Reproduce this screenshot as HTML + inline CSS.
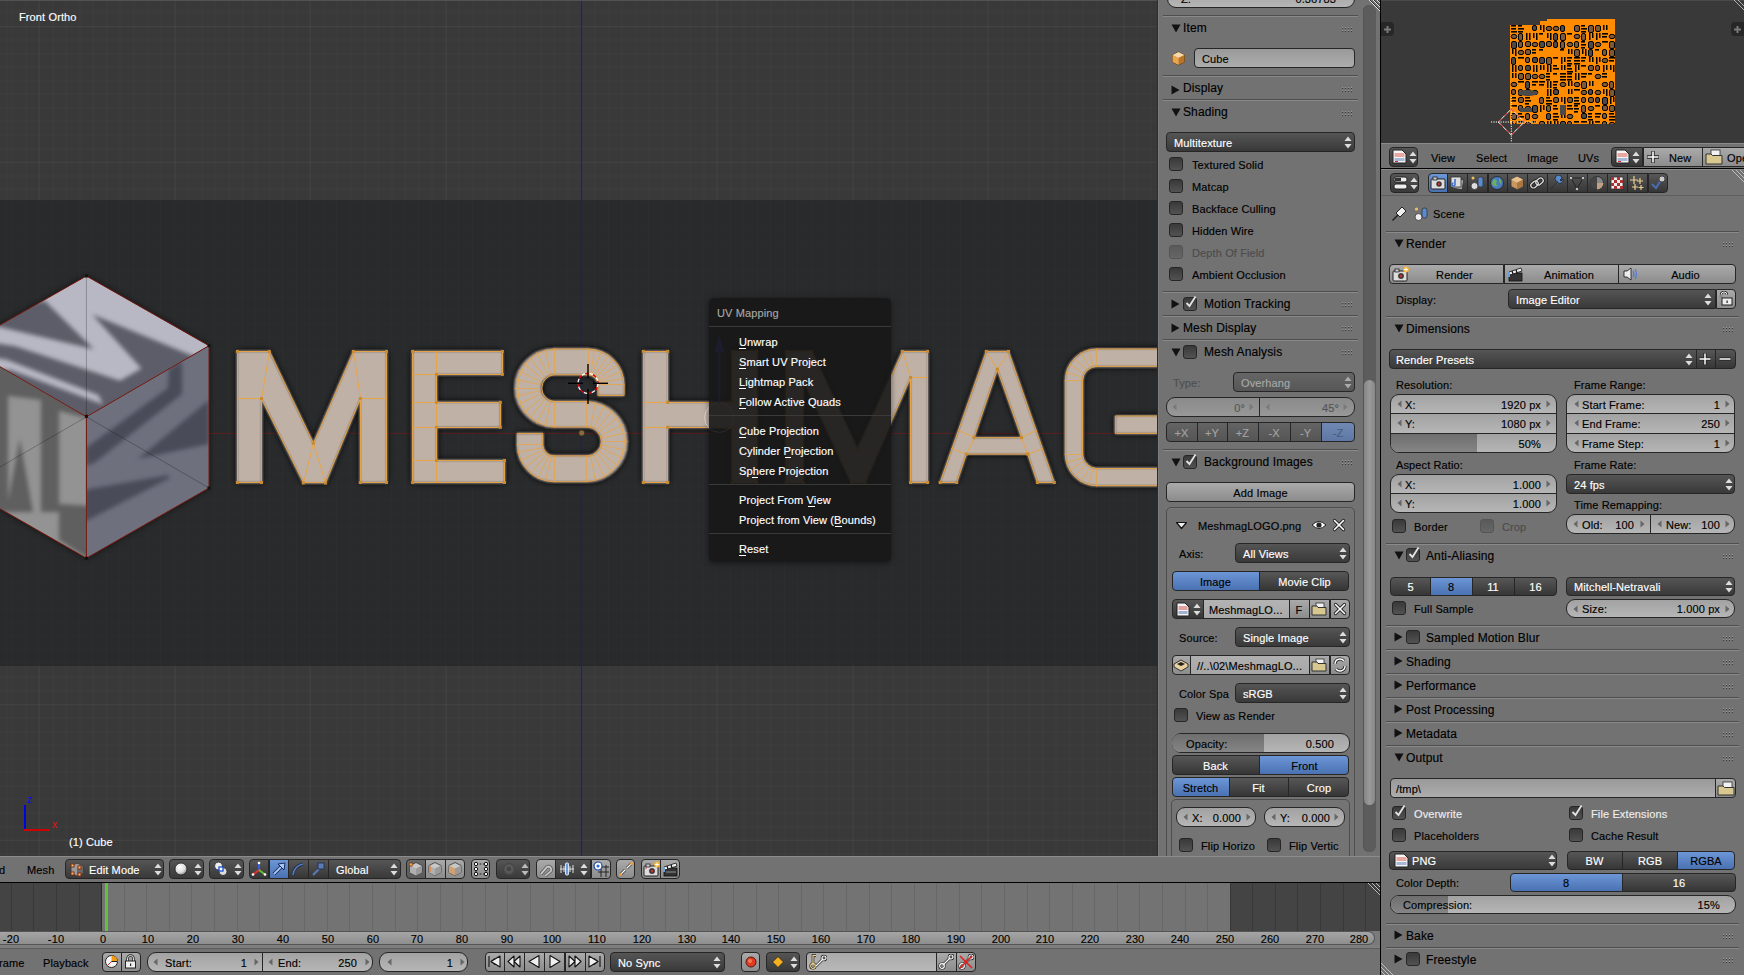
<!DOCTYPE html>
<html><head><meta charset="utf-8">
<style>
*{margin:0;padding:0;box-sizing:border-box}
html,body{width:1744px;height:975px;overflow:hidden}
body{position:relative;background:#1a1a1a;font-family:"Liberation Sans",sans-serif;font-size:11px;color:#000}
.a{position:absolute}
.t{position:absolute;white-space:nowrap;line-height:13px;height:13px;letter-spacing:0.12px;-webkit-text-stroke:0.15px currentColor}
.w{color:#fff}
.btn{position:absolute;border:1px solid #191919;border-radius:4px;background:linear-gradient(#a8a8a8,#8e8e8e);text-align:center;line-height:17px;white-space:nowrap;overflow:hidden}
.num{position:absolute;border:1px solid #191919;border-radius:8px;background:linear-gradient(#a3a3a3,#b7b7b7);line-height:17px;white-space:nowrap;overflow:hidden}
.menu{position:absolute;border:1px solid #191919;border-radius:4px;background:linear-gradient(#555,#3b3b3b);color:#fff;line-height:17px;white-space:nowrap;overflow:hidden;padding-left:8px}
.rad{position:absolute;border:1px solid #191919;background:linear-gradient(#4f4f4f,#3d3d3d);color:#fff;text-align:center;line-height:17px;white-space:nowrap;overflow:hidden}
.sel{background:linear-gradient(#6b93d1,#4f78b8);color:#000}
.chk{position:absolute;width:14px;height:14px;border:1px solid #191919;border-radius:3px;background:linear-gradient(#3c3c3c,#505050)}
.tf{position:absolute;border:1px solid #191919;border-radius:4px;background:linear-gradient(#999,#aaa);line-height:17px;white-space:nowrap;overflow:hidden;padding-left:8px}
.sep{position:absolute;height:2px;border-top:1px solid #5a5a5a;border-bottom:1px solid #858585}
.ul{position:absolute;height:1px;background:#fff}
</style></head>
<body>

<!-- ============ 3D VIEWPORT ============ -->
<div class="a" id="vp" style="left:0;top:0;width:1158px;height:856px;background:#393939;overflow:hidden">
  <div class="a" style="left:0;top:0;width:1158px;height:856px;background-image:repeating-linear-gradient(90deg,rgba(255,255,255,0.016) 0 1px,transparent 1px 13.56px),repeating-linear-gradient(180deg,rgba(255,255,255,0.016) 0 1px,transparent 1px 13.56px);background-position:11.5px 0,0 12.5px"></div>
  <div class="a" style="left:0;top:0;width:1158px;height:856px;background-image:repeating-linear-gradient(90deg,rgba(255,255,255,0.03) 0 1px,transparent 1px 135.6px),repeating-linear-gradient(180deg,rgba(255,255,255,0.03) 0 1px,transparent 1px 135.6px);background-position:38.6px 0,0 26px"></div>
  <div class="a" style="left:0;top:200px;width:1158px;height:466px;background:#292a2c"></div>
  <div class="a" style="left:0;top:200px;width:1158px;height:466px;background-image:repeating-linear-gradient(90deg,rgba(255,235,210,0.013) 0 1px,transparent 1px 13.56px),repeating-linear-gradient(180deg,rgba(255,235,210,0.013) 0 1px,transparent 1px 13.56px);background-position:11px 0,0 1.5px"></div>
  <svg class="a" style="left:0;top:0" width="1158" height="856"><line x1="0" y1="433.5" x2="1158" y2="433.5" stroke="#5a2020" stroke-width="1"/><line x1="581.5" y1="0" x2="581.5" y2="856" stroke="#1c1c8c" stroke-width="1.2"/></svg>

<svg class="a" style="left:0;top:0" width="260" height="600" viewBox="0 0 260 600">
<defs><filter id="cb" x="-20%" y="-20%" width="140%" height="140%"><feGaussianBlur stdDeviation="2.2"/></filter>
<clipPath id="ctop"><polygon points="86.4,276 209,345.7 86.4,416.8 -36.2,345.7"/></clipPath>
<clipPath id="crt"><polygon points="86.4,416.8 209,345.7 209,488 86.4,558.2"/></clipPath>
<clipPath id="clf"><polygon points="-36.2,345.7 86.4,416.8 86.4,558.2 -36.2,488"/></clipPath>
<filter id="csh" x="-20%" y="-20%" width="140%" height="140%"><feGaussianBlur stdDeviation="3"/></filter></defs>
<polygon points="86.4,276 209,345.7 209,488 86.4,558.2 -36.2,488 -36.2,345.7" fill="#000" opacity="0.6" filter="url(#csh)"/>
<g clip-path="url(#ctop)"><polygon points="86.4,276 209,345.7 86.4,416.8 -36.2,345.7" fill="#b7b8c4"/>
<g filter="url(#cb)" fill="#5c5d68">
<polygon points="44.6,300.8 93.8,349.2 0,327 -10,326 -10,310"/>
<polygon points="92.3,314.6 215,365 215,440 -10,440 -10,342.3 15.4,346.2 120,380.7 141.5,368.4"/>
</g>
<g filter="url(#cb)" fill="#b7b8c4"><polygon points="-10,357 6.2,359.5 98.5,395 103,404.5 10.8,370 -10,370"/></g>
</g>
<g clip-path="url(#crt)"><polygon points="86.4,416.8 209,345.7 209,488 86.4,558.2" fill="#6e707e"/>
<g filter="url(#cb)" fill="#4a4c59">
<polygon points="169,369 182,361 182,394 94.9,462.5 86,466 86,448 167.8,388"/>
<polygon points="209,400 209,444 137.7,459"/>
<polygon points="84,490 168,475 170,478 84,522"/>
</g></g>
<g clip-path="url(#clf)"><polygon points="-36.2,345.7 86.4,416.8 86.4,558.2 -36.2,488" fill="#939393"/>
<g filter="url(#cb)" fill="#5e5e5e">
<polygon points="-5,360 85.4,412.8 85.4,418 60,411 41,400 -5,394"/>
<polygon points="41,383 59,392 59,512 41,512"/>
<polygon points="19.7,438.8 33,512 6,512"/>
<polygon points="-5,366 8,371 8,512 -5,512"/>
<polygon points="59,504 90,506 90,560 59,540"/>
</g></g>
<g stroke="#7a1a10" stroke-width="1" fill="none"><polygon points="86.4,276 209,345.7 209,488 86.4,558.2 -36.2,488 -36.2,345.7"/><polyline points="-36.2,345.7 86.4,416.8 209,345.7"/><line x1="86.4" y1="416.8" x2="86.4" y2="558.2"/></g>
<g stroke="#000" stroke-width="0.5" opacity="0.5"><line x1="86.4" y1="276" x2="86.4" y2="416.8"/><line x1="86.4" y1="416.8" x2="209" y2="488"/><line x1="86.4" y1="416.8" x2="-36.2" y2="488"/></g>
<g fill="#111"><rect x="84.9" y="414.8" width="3" height="3"/><rect x="207.5" y="344.2" width="3" height="3"/><rect x="207.5" y="486.5" width="3" height="3"/><rect x="84.9" y="556.7" width="3" height="3"/><rect x="84.9" y="274.5" width="3" height="3"/></g>
</svg>
<svg class="a" style="left:0;top:0" width="1158" height="856" viewBox="0 0 1158 856">
<defs><filter id="sh" x="-10%" y="-10%" width="120%" height="120%"><feGaussianBlur in="SourceAlpha" stdDeviation="3.5"/><feOffset dx="0" dy="0"/><feComponentTransfer><feFuncA type="linear" slope="1.35"/></feComponentTransfer><feMerge><feMergeNode/><feMergeNode in="SourceGraphic"/></feMerge></filter>
<filter id="bl"><feGaussianBlur stdDeviation="2.6"/></filter>
<filter id="bl1" x="-5%" y="-5%" width="110%" height="110%"><feGaussianBlur stdDeviation="1.3"/></filter></defs>
<g filter="url(#sh)"><g><g fill="#bfb1a6" filter="url(#bl1)">
<polygon points="237.4,351.4 269.3,351.4 313.3,443.3 353.3,351.4 386.5,351.4 386.5,482.5 360.3,482.5 360.3,398.5 325.5,483.0 303.3,483.0 261.5,398.5 261.5,482.5 237.4,482.5"/>
<polygon points="412.6,351.4 502.4,351.4 502.4,374.4 436.5,374.4 436.5,402.3 500.3,402.3 500.3,427.3 436.5,427.3 436.5,460.4 504.5,460.4 504.5,482.5 412.6,482.5"/>
<polygon points="643.3,351.4 667.7,351.4 667.7,402.3 732.3,402.3 732.3,351.4 756.7,351.4 756.7,482.5 732.3,482.5 732.3,427.3 667.7,427.3 667.7,482.5 643.3,482.5"/>
<polygon points="786.3,351.4 811.6,351.4 857.5,450.0 902.3,351.4 927.6,351.4 927.6,482.5 910.5,482.5 910.5,377.4 864.8,482.5 851.7,482.5 803.0,377.4 803.0,482.5 786.3,482.5"/>
<path fill-rule="evenodd" d="M986.3,351.4 L1008.5,351.4 L1054.3,482.5 L1037.4,482.5 L1027.8,454.1 L966.3,454.1 L956.7,482.5 L940.1,482.5 Z M997.3,369.2 L1021.6,437.7 L974.0,437.7 Z"/>
<path d="M611,395.4 L611,385 A23,23 0 0 0 588,361.8 L554,361.8 A26.2,26.2 0 0 0 554,414.2 L587,414.2 A27.3,27.3 0 0 1 587,468.8 L554,468.8 A24,24 0 0 1 530,444.8 L530,433.4" fill="none" stroke="#bfb1a6" stroke-width="26"/>
<path d="M1200,357.7 L1097,357.7 A23,23 0 0 0 1074,380.7 L1074,454 A23,23 0 0 0 1097,477 L1200,477" fill="none" stroke="#bfb1a6" stroke-width="17.5"/>
<rect x="1115.4" y="416" width="60" height="17.4"/>
</g></g></g>
<g fill="none" stroke="#eaa445" stroke-width="1" opacity="0.95">
<polygon points="237.5,351.5 269.5,351.5 313.5,443.5 353.5,351.5 386.5,351.5 386.5,482.5 360.5,482.5 360.5,398.5 325.5,482.5 303.5,482.5 261.5,398.5 261.5,482.5 237.5,482.5"/>
<polygon points="412.5,351.5 502.5,351.5 502.5,374.5 436.5,374.5 436.5,402.5 500.5,402.5 500.5,427.5 436.5,427.5 436.5,460.5 504.5,460.5 504.5,482.5 412.5,482.5"/>
<polygon points="643.5,351.5 667.5,351.5 667.5,402.5 732.5,402.5 732.5,351.5 756.5,351.5 756.5,482.5 732.5,482.5 732.5,427.5 667.5,427.5 667.5,482.5 643.5,482.5"/>
<polygon points="786.5,351.5 811.5,351.5 857.5,450.5 902.5,351.5 927.5,351.5 927.5,482.5 910.5,482.5 910.5,377.5 864.5,482.5 851.5,482.5 802.5,377.5 802.5,482.5 786.5,482.5"/>
<path d="M986.3,351.4 L1008.5,351.4 L1054.3,482.5 L1037.4,482.5 L1027.8,454.1 L966.3,454.1 L956.7,482.5 L940.1,482.5 Z M997.3,369.2 L1021.6,437.7 L974.0,437.7 Z"/>
<line x1="237.5" y1="398.5" x2="261.5" y2="398.5"/>
<line x1="269.5" y1="351.5" x2="261.5" y2="398.5"/>
<line x1="313.5" y1="443.5" x2="303.5" y2="482.5"/>
<line x1="313.5" y1="443.5" x2="325.5" y2="482.5"/>
<line x1="353.5" y1="351.5" x2="360.5" y2="398.5"/>
<line x1="360.5" y1="398.5" x2="386.5" y2="398.5"/>
<line x1="436.5" y1="351.5" x2="436.5" y2="482.5"/>
<line x1="412.5" y1="374.5" x2="436.5" y2="374.5"/>
<line x1="412.5" y1="402.5" x2="436.5" y2="402.5"/>
<line x1="412.5" y1="427.5" x2="436.5" y2="427.5"/>
<line x1="412.5" y1="460.5" x2="436.5" y2="460.5"/>
<line x1="643.5" y1="402.5" x2="667.5" y2="402.5"/>
<line x1="643.5" y1="427.5" x2="667.5" y2="427.5"/>
<line x1="732.5" y1="402.5" x2="756.5" y2="402.5"/>
<line x1="732.5" y1="427.5" x2="756.5" y2="427.5"/>
<line x1="902.5" y1="351.5" x2="910.5" y2="377.5"/>
<line x1="910.5" y1="377.5" x2="927.5" y2="377.5"/>
<line x1="811.5" y1="351.5" x2="802.5" y2="377.5"/>
<line x1="786.5" y1="377.5" x2="802.5" y2="377.5"/>
<line x1="986.5" y1="351.5" x2="997.5" y2="369.5"/>
<line x1="1008.5" y1="351.5" x2="997.5" y2="369.5"/>
<line x1="974.5" y1="437.5" x2="958.5" y2="430.5"/>
<line x1="1021.5" y1="437.5" x2="1036.5" y2="430.5"/>
<line x1="966.5" y1="454.5" x2="951.5" y2="448.5"/>
<line x1="1027.5" y1="454.5" x2="1042.5" y2="448.5"/>
<line x1="974.5" y1="437.5" x2="966.5" y2="454.5"/>
<line x1="1021.5" y1="437.5" x2="1027.5" y2="454.5"/>
<path d="M598,395.4 L598,385 A10,10 0 0 0 588,374.8 L554,374.8 A13.4,13.4 0 0 0 554,401.5 L587,401.5 A40.2,40.2 0 0 1 587,481.7 L554,481.7 A37,37 0 0 1 517.4,444.8 L517.4,433.4 L542.7,433.4 L542.7,444.8 A11,11 0 0 0 554,455.9 L587,455.9 A14.4,14.4 0 0 0 587,427 L554,427 A39.1,39.1 0 0 1 554,349 L588,349 A36,36 0 0 1 624,385 L624,395.4 Z"/>
<line x1="554.5" y1="401.5" x2="554.5" y2="427.5" stroke-width="0.8"/>
<line x1="550.5" y1="401.5" x2="545.5" y2="426.5" stroke-width="0.8"/>
<line x1="548.5" y1="400.5" x2="536.5" y2="423.5" stroke-width="0.8"/>
<line x1="545.5" y1="398.5" x2="529.5" y2="418.5" stroke-width="0.8"/>
<line x1="543.5" y1="396.5" x2="523.5" y2="412.5" stroke-width="0.8"/>
<line x1="541.5" y1="393.5" x2="518.5" y2="404.5" stroke-width="0.8"/>
<line x1="540.5" y1="390.5" x2="515.5" y2="396.5" stroke-width="0.8"/>
<line x1="540.5" y1="388.5" x2="514.5" y2="388.5" stroke-width="0.8"/>
<line x1="540.5" y1="384.5" x2="515.5" y2="379.5" stroke-width="0.8"/>
<line x1="541.5" y1="382.5" x2="518.5" y2="370.5" stroke-width="0.8"/>
<line x1="543.5" y1="379.5" x2="523.5" y2="363.5" stroke-width="0.8"/>
<line x1="545.5" y1="377.5" x2="529.5" y2="357.5" stroke-width="0.8"/>
<line x1="548.5" y1="375.5" x2="536.5" y2="352.5" stroke-width="0.8"/>
<line x1="550.5" y1="374.5" x2="545.5" y2="349.5" stroke-width="0.8"/>
<line x1="554.5" y1="374.5" x2="554.5" y2="348.5" stroke-width="0.8"/>
<line x1="588.5" y1="374.5" x2="588.5" y2="348.5" stroke-width="0.8"/>
<line x1="590.5" y1="375.5" x2="594.5" y2="349.5" stroke-width="0.8"/>
<line x1="591.5" y1="375.5" x2="601.5" y2="351.5" stroke-width="0.8"/>
<line x1="593.5" y1="376.5" x2="608.5" y2="355.5" stroke-width="0.8"/>
<line x1="595.5" y1="377.5" x2="613.5" y2="359.5" stroke-width="0.8"/>
<line x1="596.5" y1="379.5" x2="617.5" y2="364.5" stroke-width="0.8"/>
<line x1="597.5" y1="381.5" x2="621.5" y2="371.5" stroke-width="0.8"/>
<line x1="597.5" y1="382.5" x2="623.5" y2="378.5" stroke-width="0.8"/>
<line x1="598.5" y1="384.5" x2="624.5" y2="384.5" stroke-width="0.8"/>
<line x1="586.5" y1="427.5" x2="586.5" y2="401.5" stroke-width="0.8"/>
<line x1="590.5" y1="427.5" x2="595.5" y2="402.5" stroke-width="0.8"/>
<line x1="593.5" y1="428.5" x2="604.5" y2="405.5" stroke-width="0.8"/>
<line x1="596.5" y1="430.5" x2="612.5" y2="410.5" stroke-width="0.8"/>
<line x1="598.5" y1="432.5" x2="618.5" y2="416.5" stroke-width="0.8"/>
<line x1="600.5" y1="435.5" x2="623.5" y2="424.5" stroke-width="0.8"/>
<line x1="600.5" y1="438.5" x2="626.5" y2="432.5" stroke-width="0.8"/>
<line x1="601.5" y1="441.5" x2="627.5" y2="441.5" stroke-width="0.8"/>
<line x1="600.5" y1="444.5" x2="626.5" y2="450.5" stroke-width="0.8"/>
<line x1="600.5" y1="447.5" x2="623.5" y2="458.5" stroke-width="0.8"/>
<line x1="598.5" y1="450.5" x2="618.5" y2="466.5" stroke-width="0.8"/>
<line x1="596.5" y1="452.5" x2="612.5" y2="472.5" stroke-width="0.8"/>
<line x1="593.5" y1="454.5" x2="604.5" y2="477.5" stroke-width="0.8"/>
<line x1="590.5" y1="455.5" x2="595.5" y2="480.5" stroke-width="0.8"/>
<line x1="586.5" y1="455.5" x2="586.5" y2="481.5" stroke-width="0.8"/>
<line x1="554.5" y1="455.5" x2="554.5" y2="481.5" stroke-width="0.8"/>
<line x1="551.5" y1="455.5" x2="545.5" y2="480.5" stroke-width="0.8"/>
<line x1="549.5" y1="454.5" x2="537.5" y2="478.5" stroke-width="0.8"/>
<line x1="547.5" y1="453.5" x2="530.5" y2="473.5" stroke-width="0.8"/>
<line x1="545.5" y1="451.5" x2="525.5" y2="467.5" stroke-width="0.8"/>
<line x1="544.5" y1="449.5" x2="520.5" y2="460.5" stroke-width="0.8"/>
<line x1="543.5" y1="447.5" x2="517.5" y2="452.5" stroke-width="0.8"/>
<line x1="542.5" y1="444.5" x2="516.5" y2="444.5" stroke-width="0.8"/>
<line x1="1082.5" y1="380.5" x2="1064.5" y2="380.5" stroke-width="0.8"/>
<line x1="1083.5" y1="377.5" x2="1066.5" y2="372.5" stroke-width="0.8"/>
<line x1="1084.5" y1="373.5" x2="1069.5" y2="364.5" stroke-width="0.8"/>
<line x1="1087.5" y1="370.5" x2="1074.5" y2="358.5" stroke-width="0.8"/>
<line x1="1090.5" y1="368.5" x2="1080.5" y2="352.5" stroke-width="0.8"/>
<line x1="1093.5" y1="367.5" x2="1088.5" y2="349.5" stroke-width="0.8"/>
<line x1="1096.5" y1="366.5" x2="1096.5" y2="348.5" stroke-width="0.8"/>
<line x1="1096.5" y1="468.5" x2="1096.5" y2="486.5" stroke-width="0.8"/>
<line x1="1093.5" y1="467.5" x2="1088.5" y2="484.5" stroke-width="0.8"/>
<line x1="1090.5" y1="466.5" x2="1080.5" y2="481.5" stroke-width="0.8"/>
<line x1="1087.5" y1="463.5" x2="1074.5" y2="476.5" stroke-width="0.8"/>
<line x1="1084.5" y1="460.5" x2="1069.5" y2="470.5" stroke-width="0.8"/>
<line x1="1083.5" y1="457.5" x2="1066.5" y2="462.5" stroke-width="0.8"/>
<line x1="1082.5" y1="454.5" x2="1064.5" y2="454.5" stroke-width="0.8"/>
<path d="M1158,349 L1097,349 A31.7,31.7 0 0 0 1065.3,380.7 L1065.3,454 A31.7,31.7 0 0 0 1097,485.7 L1158,485.7 M1158,468.6 L1097,468.6 A14.6,14.6 0 0 1 1082.5,454 L1082.5,380.7 A14.6,14.6 0 0 1 1097,366.3 L1158,366.3 M1158,416 L1115.4,416 L1115.4,433.4 L1158,433.4"/>
</g>
<g fill="#c98a30">
<rect x="909.0" y="481.0" width="3" height="3"/>
<rect x="926.1" y="349.9" width="3" height="3"/>
<rect x="358.8" y="481.0" width="3" height="3"/>
<rect x="498.8" y="425.8" width="3" height="3"/>
<rect x="411.1" y="349.9" width="3" height="3"/>
<rect x="385.0" y="481.0" width="3" height="3"/>
<rect x="730.8" y="349.9" width="3" height="3"/>
<rect x="435.0" y="400.8" width="3" height="3"/>
<rect x="666.2" y="481.0" width="3" height="3"/>
<rect x="351.8" y="349.9" width="3" height="3"/>
<rect x="1035.9" y="481.0" width="3" height="3"/>
<rect x="995.8" y="367.7" width="3" height="3"/>
<rect x="267.8" y="349.9" width="3" height="3"/>
<rect x="926.1" y="481.0" width="3" height="3"/>
<rect x="498.8" y="400.8" width="3" height="3"/>
<rect x="235.9" y="349.9" width="3" height="3"/>
<rect x="411.1" y="481.0" width="3" height="3"/>
<rect x="730.8" y="481.0" width="3" height="3"/>
<rect x="801.5" y="375.9" width="3" height="3"/>
<rect x="235.9" y="481.0" width="3" height="3"/>
<rect x="260.0" y="397.0" width="3" height="3"/>
<rect x="972.5" y="436.2" width="3" height="3"/>
<rect x="909.0" y="375.9" width="3" height="3"/>
<rect x="1007.0" y="349.9" width="3" height="3"/>
<rect x="784.8" y="349.9" width="3" height="3"/>
<rect x="1026.3" y="452.6" width="3" height="3"/>
<rect x="641.8" y="349.9" width="3" height="3"/>
<rect x="435.0" y="458.9" width="3" height="3"/>
<rect x="324.0" y="481.5" width="3" height="3"/>
<rect x="500.9" y="349.9" width="3" height="3"/>
<rect x="938.6" y="481.0" width="3" height="3"/>
<rect x="784.8" y="481.0" width="3" height="3"/>
<rect x="503.0" y="481.0" width="3" height="3"/>
<rect x="358.8" y="397.0" width="3" height="3"/>
<rect x="641.8" y="481.0" width="3" height="3"/>
<rect x="856.0" y="448.5" width="3" height="3"/>
<rect x="850.2" y="481.0" width="3" height="3"/>
<rect x="984.8" y="349.9" width="3" height="3"/>
<rect x="301.8" y="481.5" width="3" height="3"/>
<rect x="1020.1" y="436.2" width="3" height="3"/>
<rect x="503.0" y="458.9" width="3" height="3"/>
<rect x="666.2" y="425.8" width="3" height="3"/>
<rect x="755.2" y="349.9" width="3" height="3"/>
<rect x="435.0" y="372.9" width="3" height="3"/>
<rect x="900.8" y="349.9" width="3" height="3"/>
<rect x="730.8" y="425.8" width="3" height="3"/>
<rect x="863.3" y="481.0" width="3" height="3"/>
<rect x="755.2" y="481.0" width="3" height="3"/>
<rect x="311.8" y="441.8" width="3" height="3"/>
<rect x="810.1" y="349.9" width="3" height="3"/>
<rect x="1052.8" y="481.0" width="3" height="3"/>
<rect x="955.2" y="481.0" width="3" height="3"/>
<rect x="666.2" y="400.8" width="3" height="3"/>
<rect x="435.0" y="425.8" width="3" height="3"/>
<rect x="260.0" y="481.0" width="3" height="3"/>
<rect x="801.5" y="481.0" width="3" height="3"/>
<rect x="500.9" y="372.9" width="3" height="3"/>
<rect x="730.8" y="400.8" width="3" height="3"/>
<rect x="385.0" y="349.9" width="3" height="3"/>
<rect x="964.8" y="452.6" width="3" height="3"/>
<rect x="666.2" y="349.9" width="3" height="3"/>
</g>
</svg>
  <div class="t w" style="left:19px;top:11px">Front Ortho</div>
  <div class="t w" style="left:69px;top:836px">(1) Cube</div>
  <!-- axes widget -->
  <div class="a" style="left:24px;top:805px;width:2px;height:26px;background:#0000e0"></div>
  <div class="a" style="left:24px;top:829px;width:26px;height:2px;background:#d00000"></div>
  <div class="t" style="left:27px;top:793px;color:#1010e0;font-size:10px">z</div>
  <div class="t" style="left:52px;top:818px;color:#e01010;font-size:10px">x</div>
  <!-- 3D cursor -->
  <svg class="a" style="left:560px;top:356px" width="56" height="56" viewBox="560 356 56 56">
    <circle cx="588" cy="383.3" r="10" fill="none" stroke="#fff" stroke-width="1.3" stroke-dasharray="4 4"/>
    <circle cx="588" cy="383.3" r="10" fill="none" stroke="#e00" stroke-width="1.3" stroke-dasharray="4 4" stroke-dashoffset="4"/>
    <g stroke="#000" stroke-width="1.4"><line x1="568" y1="383.3" x2="583" y2="383.3"/><line x1="593" y1="383.3" x2="608" y2="383.3"/><line x1="588" y1="364" x2="588" y2="378"/><line x1="588" y1="389" x2="588" y2="404"/></g>
  </svg>
  <svg class="a" style="left:575px;top:426px" width="14" height="14" viewBox="575 426 14 14"><circle cx="581.7" cy="433" r="3" fill="#8a6a3a" stroke="#222" stroke-width="0.6"/></svg>
  <!-- manipulator -->
  <svg class="a" style="left:700px;top:330px" width="40" height="110" viewBox="700 330 40 110">
    <circle cx="719.3" cy="417.7" r="14.7" fill="none" stroke="#ddd" stroke-width="1"/>
    <line x1="719.3" y1="403" x2="719.3" y2="345" stroke="#4a4aff" stroke-width="2"/>
    <polygon points="719.3,335 714.5,352 724.1,352" fill="#4a4aff"/>
  </svg>
  <!-- popup menu -->
  <div class="a" style="left:709px;top:298px;width:182px;height:264px;border-radius:5px;background:rgba(23,23,23,0.9);box-shadow:0 1px 6px rgba(0,0,0,0.5)">
    <div class="t" style="left:8px;top:9px;color:#a8a8a8">UV Mapping</div>
    <div class="a" style="left:0;top:28px;width:182px;height:1px;background:#3a3a3a"></div>
    <div class="t w" style="left:30px;top:38px">Unwrap</div><div class="ul" style="left:30px;top:50px;width:7px"></div>
    <div class="t w" style="left:30px;top:58px">Smart UV Project</div><div class="ul" style="left:30px;top:70px;width:7px"></div>
    <div class="t w" style="left:30px;top:78px">Lightmap Pack</div><div class="ul" style="left:30px;top:90px;width:7px"></div>
    <div class="t w" style="left:30px;top:98px">Follow Active Quads</div><div class="ul" style="left:30px;top:110px;width:7px"></div>
    <div class="a" style="left:0;top:117px;width:182px;height:1px;background:#3a3a3a"></div>
    <div class="t w" style="left:30px;top:127px">Cube Projection</div><div class="ul" style="left:30px;top:139px;width:7px"></div>
    <div class="t w" style="left:30px;top:147px">Cylinder Projection</div><div class="ul" style="left:76px;top:159px;width:6px"></div>
    <div class="t w" style="left:30px;top:167px">Sphere Projection</div><div class="ul" style="left:43px;top:179px;width:6px"></div>
    <div class="a" style="left:0;top:186px;width:182px;height:1px;background:#3a3a3a"></div>
    <div class="t w" style="left:30px;top:196px">Project From View</div><div class="ul" style="left:99px;top:208px;width:7px"></div>
    <div class="t w" style="left:30px;top:216px">Project from View (Bounds)</div><div class="ul" style="left:126px;top:228px;width:7px"></div>
    <div class="a" style="left:0;top:235px;width:182px;height:1px;background:#3a3a3a"></div>
    <div class="t w" style="left:30px;top:245px">Reset</div><div class="ul" style="left:30px;top:257px;width:7px"></div>
  </div>
</div>

<!-- ============ N PANEL ============ -->
<div class="a" style="left:1158px;top:0;width:222px;height:856px;background:#727272;overflow:hidden"></div>
<div class="a" style="left:1157px;top:0px;width:1px;height:856px;background:#2c2c2c"></div>
<div class="a" style="left:1158px;top:0px;width:1px;height:856px;background:#7c7c7c"></div>
<div class="a" style="left:0px;top:0px;width:1157px;height:1px;background:#525252"></div>
<div class="a" style="left:1167px;top:-12px;width:188px;height:20px;border:1px solid #262626;border-radius:9px 9px 9px 9px;background:linear-gradient(#a2a2a2,#b6b6b6);"></div>
<div class="t" style="left:1181px;top:-7px;color:#000;font-size:11px;">Z:</div>
<div class="t" style="left:1036px;top:-7px;width:300px;text-align:right;color:#000;font-size:11px;">0.36783</div>
<div class="a" style="left:1163px;top:15px;width:195px;height:1px;background:#4e4e4e"></div><div class="a" style="left:1163px;top:16px;width:195px;height:1px;background:#8a8a8a"></div>
<svg class="a" style="left:1171px;top:24px" width="10" height="9" viewBox="0 0 10 9"><polygon points="0.5,0.5 9.5,0.5 5,8.5" fill="#111"/></svg>
<div class="t" style="left:1183px;top:22px;color:#000;font-size:12px;">Item</div>
<svg class="a" style="left:1342px;top:27px" width="12" height="6" viewBox="0 0 12 6"><g fill="#3a3a3a"><rect x="0" y="1" width="1" height="1"/><rect x="0" y="4" width="1" height="1"/><rect x="3" y="1" width="1" height="1"/><rect x="3" y="4" width="1" height="1"/><rect x="6" y="1" width="1" height="1"/><rect x="6" y="4" width="1" height="1"/><rect x="9" y="1" width="1" height="1"/><rect x="9" y="4" width="1" height="1"/></g><g fill="#9a9a9a"><rect x="0" y="0" width="1" height="1"/><rect x="0" y="3" width="1" height="1"/><rect x="3" y="0" width="1" height="1"/><rect x="3" y="3" width="1" height="1"/><rect x="6" y="0" width="1" height="1"/><rect x="6" y="3" width="1" height="1"/><rect x="9" y="0" width="1" height="1"/><rect x="9" y="3" width="1" height="1"/></g></svg>
<svg class="a" style="left:1171px;top:51px" width="15" height="15" viewBox="0 0 15 15"><polygon points="7.5,1 13.5,4 13.5,11 7.5,14 1.5,11 1.5,4" fill="#c88a3c" stroke="#3a2a10" stroke-width="0.8"/><polygon points="7.5,1 13.5,4 7.5,7 1.5,4" fill="#f5d9a8"/><polygon points="7.5,7 13.5,4 13.5,11 7.5,14" fill="#b8742a"/><polygon points="1.5,4 7.5,7 7.5,14 1.5,11" fill="#e8a650"/></svg>
<div class="a" style="left:1194px;top:48px;width:161px;height:20px;border:1px solid #262626;border-radius:4px 4px 4px 4px;background:linear-gradient(#999999,#adadad);"></div>
<div class="t" style="left:1202px;top:53px;color:#000;font-size:11px;">Cube</div>
<div class="a" style="left:1163px;top:75px;width:195px;height:1px;background:#4e4e4e"></div><div class="a" style="left:1163px;top:76px;width:195px;height:1px;background:#8a8a8a"></div>
<svg class="a" style="left:1171px;top:85px" width="9" height="10" viewBox="0 0 9 10"><polygon points="0.5,0.5 8.5,5 0.5,9.5" fill="#111"/></svg>
<div class="t" style="left:1183px;top:82px;color:#000;font-size:12px;">Display</div>
<svg class="a" style="left:1342px;top:87px" width="12" height="6" viewBox="0 0 12 6"><g fill="#3a3a3a"><rect x="0" y="1" width="1" height="1"/><rect x="0" y="4" width="1" height="1"/><rect x="3" y="1" width="1" height="1"/><rect x="3" y="4" width="1" height="1"/><rect x="6" y="1" width="1" height="1"/><rect x="6" y="4" width="1" height="1"/><rect x="9" y="1" width="1" height="1"/><rect x="9" y="4" width="1" height="1"/></g><g fill="#9a9a9a"><rect x="0" y="0" width="1" height="1"/><rect x="0" y="3" width="1" height="1"/><rect x="3" y="0" width="1" height="1"/><rect x="3" y="3" width="1" height="1"/><rect x="6" y="0" width="1" height="1"/><rect x="6" y="3" width="1" height="1"/><rect x="9" y="0" width="1" height="1"/><rect x="9" y="3" width="1" height="1"/></g></svg>
<div class="a" style="left:1163px;top:99px;width:195px;height:1px;background:#4e4e4e"></div><div class="a" style="left:1163px;top:100px;width:195px;height:1px;background:#8a8a8a"></div>
<svg class="a" style="left:1171px;top:108px" width="10" height="9" viewBox="0 0 10 9"><polygon points="0.5,0.5 9.5,0.5 5,8.5" fill="#111"/></svg>
<div class="t" style="left:1183px;top:106px;color:#000;font-size:12px;">Shading</div>
<svg class="a" style="left:1342px;top:111px" width="12" height="6" viewBox="0 0 12 6"><g fill="#3a3a3a"><rect x="0" y="1" width="1" height="1"/><rect x="0" y="4" width="1" height="1"/><rect x="3" y="1" width="1" height="1"/><rect x="3" y="4" width="1" height="1"/><rect x="6" y="1" width="1" height="1"/><rect x="6" y="4" width="1" height="1"/><rect x="9" y="1" width="1" height="1"/><rect x="9" y="4" width="1" height="1"/></g><g fill="#9a9a9a"><rect x="0" y="0" width="1" height="1"/><rect x="0" y="3" width="1" height="1"/><rect x="3" y="0" width="1" height="1"/><rect x="3" y="3" width="1" height="1"/><rect x="6" y="0" width="1" height="1"/><rect x="6" y="3" width="1" height="1"/><rect x="9" y="0" width="1" height="1"/><rect x="9" y="3" width="1" height="1"/></g></svg>
<div class="a" style="left:1166px;top:132px;width:189px;height:20px;border:1px solid #262626;border-radius:4px 4px 4px 4px;background:linear-gradient(#555555,#393939);"></div>
<div class="t" style="left:1174px;top:137px;color:#fff;font-size:11px;">Multitexture</div>
<svg class="a" style="left:1344px;top:136px" width="8" height="13" viewBox="0 0 8 13"><polygon points="4,0.5 7.5,5 0.5,5" fill="#ddd"/><polygon points="0.5,8 7.5,8 4,12.5" fill="#ddd"/></svg>
<div class="a" style="left:1169px;top:157px;width:14px;height:14px;border:1px solid #262626;border-radius:3px;background:linear-gradient(#393939,#525252)"></div>
<div class="t" style="left:1192px;top:159px;color:#000;font-size:11px;">Textured Solid</div>
<div class="a" style="left:1169px;top:179px;width:14px;height:14px;border:1px solid #262626;border-radius:3px;background:linear-gradient(#393939,#525252)"></div>
<div class="t" style="left:1192px;top:181px;color:#000;font-size:11px;">Matcap</div>
<div class="a" style="left:1169px;top:201px;width:14px;height:14px;border:1px solid #262626;border-radius:3px;background:linear-gradient(#393939,#525252)"></div>
<div class="t" style="left:1192px;top:203px;color:#000;font-size:11px;">Backface Culling</div>
<div class="a" style="left:1169px;top:223px;width:14px;height:14px;border:1px solid #262626;border-radius:3px;background:linear-gradient(#393939,#525252)"></div>
<div class="t" style="left:1192px;top:225px;color:#000;font-size:11px;">Hidden Wire</div>
<div class="a" style="left:1169px;top:245px;width:14px;height:14px;border:1px solid #555;border-radius:3px;background:linear-gradient(#5a5a5a,#666)"></div>
<div class="t" style="left:1192px;top:247px;color:#4c4c4c;font-size:11px;">Depth Of Field</div>
<div class="a" style="left:1169px;top:267px;width:14px;height:14px;border:1px solid #262626;border-radius:3px;background:linear-gradient(#393939,#525252)"></div>
<div class="t" style="left:1192px;top:269px;color:#000;font-size:11px;">Ambient Occlusion</div>
<div class="a" style="left:1163px;top:291px;width:195px;height:1px;background:#4e4e4e"></div><div class="a" style="left:1163px;top:292px;width:195px;height:1px;background:#8a8a8a"></div>
<svg class="a" style="left:1171px;top:299px" width="9" height="10" viewBox="0 0 9 10"><polygon points="0.5,0.5 8.5,5 0.5,9.5" fill="#111"/></svg>
<div class="a" style="left:1183px;top:297px;width:14px;height:14px;border:1px solid #262626;border-radius:3px;background:linear-gradient(#393939,#525252)"></div><svg class="a" style="left:1183px;top:294px" width="16" height="17" viewBox="0 0 16 17"><polyline points="3.5,9 6.5,12 12.5,2.5" fill="none" stroke="#e4e4e4" stroke-width="1.8"/></svg>
<div class="t" style="left:1204px;top:298px;color:#000;font-size:12px;">Motion Tracking</div>
<svg class="a" style="left:1342px;top:302px" width="12" height="6" viewBox="0 0 12 6"><g fill="#3a3a3a"><rect x="0" y="1" width="1" height="1"/><rect x="0" y="4" width="1" height="1"/><rect x="3" y="1" width="1" height="1"/><rect x="3" y="4" width="1" height="1"/><rect x="6" y="1" width="1" height="1"/><rect x="6" y="4" width="1" height="1"/><rect x="9" y="1" width="1" height="1"/><rect x="9" y="4" width="1" height="1"/></g><g fill="#9a9a9a"><rect x="0" y="0" width="1" height="1"/><rect x="0" y="3" width="1" height="1"/><rect x="3" y="0" width="1" height="1"/><rect x="3" y="3" width="1" height="1"/><rect x="6" y="0" width="1" height="1"/><rect x="6" y="3" width="1" height="1"/><rect x="9" y="0" width="1" height="1"/><rect x="9" y="3" width="1" height="1"/></g></svg>
<div class="a" style="left:1163px;top:315px;width:195px;height:1px;background:#4e4e4e"></div><div class="a" style="left:1163px;top:316px;width:195px;height:1px;background:#8a8a8a"></div>
<svg class="a" style="left:1171px;top:323px" width="9" height="10" viewBox="0 0 9 10"><polygon points="0.5,0.5 8.5,5 0.5,9.5" fill="#111"/></svg>
<div class="t" style="left:1183px;top:322px;color:#000;font-size:12px;">Mesh Display</div>
<svg class="a" style="left:1342px;top:326px" width="12" height="6" viewBox="0 0 12 6"><g fill="#3a3a3a"><rect x="0" y="1" width="1" height="1"/><rect x="0" y="4" width="1" height="1"/><rect x="3" y="1" width="1" height="1"/><rect x="3" y="4" width="1" height="1"/><rect x="6" y="1" width="1" height="1"/><rect x="6" y="4" width="1" height="1"/><rect x="9" y="1" width="1" height="1"/><rect x="9" y="4" width="1" height="1"/></g><g fill="#9a9a9a"><rect x="0" y="0" width="1" height="1"/><rect x="0" y="3" width="1" height="1"/><rect x="3" y="0" width="1" height="1"/><rect x="3" y="3" width="1" height="1"/><rect x="6" y="0" width="1" height="1"/><rect x="6" y="3" width="1" height="1"/><rect x="9" y="0" width="1" height="1"/><rect x="9" y="3" width="1" height="1"/></g></svg>
<div class="a" style="left:1163px;top:339px;width:195px;height:1px;background:#4e4e4e"></div><div class="a" style="left:1163px;top:340px;width:195px;height:1px;background:#8a8a8a"></div>
<svg class="a" style="left:1171px;top:348px" width="10" height="9" viewBox="0 0 10 9"><polygon points="0.5,0.5 9.5,0.5 5,8.5" fill="#111"/></svg>
<div class="a" style="left:1183px;top:345px;width:14px;height:14px;border:1px solid #262626;border-radius:3px;background:linear-gradient(#393939,#525252)"></div>
<div class="t" style="left:1204px;top:346px;color:#000;font-size:12px;">Mesh Analysis</div>
<svg class="a" style="left:1342px;top:350px" width="12" height="6" viewBox="0 0 12 6"><g fill="#3a3a3a"><rect x="0" y="1" width="1" height="1"/><rect x="0" y="4" width="1" height="1"/><rect x="3" y="1" width="1" height="1"/><rect x="3" y="4" width="1" height="1"/><rect x="6" y="1" width="1" height="1"/><rect x="6" y="4" width="1" height="1"/><rect x="9" y="1" width="1" height="1"/><rect x="9" y="4" width="1" height="1"/></g><g fill="#9a9a9a"><rect x="0" y="0" width="1" height="1"/><rect x="0" y="3" width="1" height="1"/><rect x="3" y="0" width="1" height="1"/><rect x="3" y="3" width="1" height="1"/><rect x="6" y="0" width="1" height="1"/><rect x="6" y="3" width="1" height="1"/><rect x="9" y="0" width="1" height="1"/><rect x="9" y="3" width="1" height="1"/></g></svg>
<div class="t" style="left:1173px;top:377px;color:#4f4f4f;font-size:11px;">Type:</div>
<div class="a" style="left:1233px;top:372px;width:122px;height:20px;border:1px solid #262626;border-radius:4px 4px 4px 4px;background:linear-gradient(#666,#565656);"></div>
<div class="t" style="left:1241px;top:377px;color:#a8a8a8;font-size:11px;">Overhang</div>
<svg class="a" style="left:1344px;top:376px" width="8" height="13" viewBox="0 0 8 13"><polygon points="4,0.5 7.5,5 0.5,5" fill="#aaa"/><polygon points="0.5,8 7.5,8 4,12.5" fill="#aaa"/></svg>
<div class="a" style="left:1166px;top:397px;width:94px;height:20px;border:1px solid #262626;border-radius:9px 0px 0px 9px;background:linear-gradient(#8a8a8a,#989898);"></div>
<div class="a" style="left:1259px;top:397px;width:96px;height:20px;border:1px solid #262626;border-radius:0px 9px 9px 0px;background:linear-gradient(#8a8a8a,#989898);"></div>
<svg class="a" style="left:1172px;top:403px" width="5" height="8" viewBox="0 0 5 8"><polygon points="4.5,0.5 4.5,7.5 0.5,4" fill="#7a7a7a"/></svg>
<svg class="a" style="left:1249px;top:403px" width="5" height="8" viewBox="0 0 5 8"><polygon points="0.5,0.5 0.5,7.5 4.5,4" fill="#7a7a7a"/></svg>
<div class="t" style="left:945px;top:402px;width:300px;text-align:right;color:#555;font-size:11px;">0°</div>
<svg class="a" style="left:1265px;top:403px" width="5" height="8" viewBox="0 0 5 8"><polygon points="4.5,0.5 4.5,7.5 0.5,4" fill="#7a7a7a"/></svg>
<svg class="a" style="left:1343px;top:403px" width="5" height="8" viewBox="0 0 5 8"><polygon points="0.5,0.5 0.5,7.5 4.5,4" fill="#7a7a7a"/></svg>
<div class="t" style="left:1039px;top:402px;width:300px;text-align:right;color:#555;font-size:11px;">45°</div>
<div class="a" style="left:1166px;top:422px;width:32px;height:20px;border:1px solid #262626;border-radius:4px 0px 0px 4px;background:linear-gradient(#646464,#555);"></div>
<div class="a" style="left:1197px;top:422px;width:31px;height:20px;border:1px solid #262626;border-radius:0px 0px 0px 0px;background:linear-gradient(#646464,#555);"></div>
<div class="a" style="left:1227px;top:422px;width:32px;height:20px;border:1px solid #262626;border-radius:0px 0px 0px 0px;background:linear-gradient(#646464,#555);"></div>
<div class="a" style="left:1258px;top:422px;width:33px;height:20px;border:1px solid #262626;border-radius:0px 0px 0px 0px;background:linear-gradient(#646464,#555);"></div>
<div class="a" style="left:1290px;top:422px;width:32px;height:20px;border:1px solid #262626;border-radius:0px 0px 0px 0px;background:linear-gradient(#646464,#555);"></div>
<div class="a" style="left:1321px;top:422px;width:34px;height:20px;border:1px solid #262626;border-radius:0px 4px 4px 0px;background:linear-gradient(#7089b3,#5e78a6);"></div>
<div class="t" style="left:1166px;top:427px;width:31px;text-align:center;color:#a3a3a3;font-size:11px;">+X</div>
<div class="t" style="left:1197px;top:427px;width:30px;text-align:center;color:#a3a3a3;font-size:11px;">+Y</div>
<div class="t" style="left:1227px;top:427px;width:31px;text-align:center;color:#a3a3a3;font-size:11px;">+Z</div>
<div class="t" style="left:1258px;top:427px;width:32px;text-align:center;color:#a3a3a3;font-size:11px;">-X</div>
<div class="t" style="left:1290px;top:427px;width:31px;text-align:center;color:#a3a3a3;font-size:11px;">-Y</div>
<div class="t" style="left:1321px;top:427px;width:34px;text-align:center;color:#4c5c7c;font-size:11px;">-Z</div>
<div class="a" style="left:1163px;top:449px;width:195px;height:1px;background:#4e4e4e"></div><div class="a" style="left:1163px;top:450px;width:195px;height:1px;background:#8a8a8a"></div>
<svg class="a" style="left:1171px;top:458px" width="10" height="9" viewBox="0 0 10 9"><polygon points="0.5,0.5 9.5,0.5 5,8.5" fill="#111"/></svg>
<div class="a" style="left:1183px;top:455px;width:14px;height:14px;border:1px solid #262626;border-radius:3px;background:linear-gradient(#393939,#525252)"></div><svg class="a" style="left:1183px;top:452px" width="16" height="17" viewBox="0 0 16 17"><polyline points="3.5,9 6.5,12 12.5,2.5" fill="none" stroke="#e4e4e4" stroke-width="1.8"/></svg>
<div class="t" style="left:1204px;top:456px;color:#000;font-size:12px;">Background Images</div>
<svg class="a" style="left:1342px;top:460px" width="12" height="6" viewBox="0 0 12 6"><g fill="#3a3a3a"><rect x="0" y="1" width="1" height="1"/><rect x="0" y="4" width="1" height="1"/><rect x="3" y="1" width="1" height="1"/><rect x="3" y="4" width="1" height="1"/><rect x="6" y="1" width="1" height="1"/><rect x="6" y="4" width="1" height="1"/><rect x="9" y="1" width="1" height="1"/><rect x="9" y="4" width="1" height="1"/></g><g fill="#9a9a9a"><rect x="0" y="0" width="1" height="1"/><rect x="0" y="3" width="1" height="1"/><rect x="3" y="0" width="1" height="1"/><rect x="3" y="3" width="1" height="1"/><rect x="6" y="0" width="1" height="1"/><rect x="6" y="3" width="1" height="1"/><rect x="9" y="0" width="1" height="1"/><rect x="9" y="3" width="1" height="1"/></g></svg>
<div class="a" style="left:1166px;top:482px;width:189px;height:20px;border:1px solid #262626;border-radius:4px 4px 4px 4px;background:linear-gradient(#aaaaaa,#8c8c8c);"></div>
<div class="t" style="left:1166px;top:487px;width:189px;text-align:center;color:#000;font-size:11px;">Add Image</div>
<div class="a" style="left:1166px;top:507px;width:189px;height:363px;border:1px solid #4e4e4e;border-radius:5px;background:rgba(128,128,128,0.06);box-shadow:inset 0 1px 0 rgba(255,255,255,0.05)"></div>
<svg class="a" style="left:1175px;top:521px" width="13" height="9" viewBox="0 0 13 9"><polygon points="1.5,1.5 11.5,1.5 6.5,7.5" fill="#eee" stroke="#111" stroke-width="1.2" stroke-linejoin="round"/></svg>
<div class="t" style="left:1198px;top:520px;color:#000;font-size:11px;">MeshmagLOGO.png</div>
<svg class="a" style="left:1311px;top:518px" width="16" height="14" viewBox="0 0 16 14"><path d="M1,7 Q8,0 15,7 Q8,14 1,7 Z" fill="#fff" stroke="#222" stroke-width="1"/><circle cx="8" cy="7" r="2.6" fill="#222"/></svg>
<svg class="a" style="left:1332px;top:518px" width="14" height="14" viewBox="0 0 14 14"><g stroke="#222" stroke-width="3.2" stroke-linecap="round"><line x1="2.5" y1="2.5" x2="11.5" y2="11.5"/><line x1="11.5" y1="2.5" x2="2.5" y2="11.5"/></g><g stroke="#fff" stroke-width="1.6" stroke-linecap="round"><line x1="2.5" y1="2.5" x2="11.5" y2="11.5"/><line x1="11.5" y1="2.5" x2="2.5" y2="11.5"/></g></svg>
<div class="t" style="left:1179px;top:548px;color:#000;font-size:11px;">Axis:</div>
<div class="a" style="left:1235px;top:543px;width:115px;height:20px;border:1px solid #262626;border-radius:4px 4px 4px 4px;background:linear-gradient(#555555,#393939);"></div>
<div class="t" style="left:1243px;top:548px;color:#fff;font-size:11px;">All Views</div>
<svg class="a" style="left:1339px;top:547px" width="8" height="13" viewBox="0 0 8 13"><polygon points="4,0.5 7.5,5 0.5,5" fill="#ddd"/><polygon points="0.5,8 7.5,8 4,12.5" fill="#ddd"/></svg>
<div class="a" style="left:1172px;top:571px;width:89px;height:20px;border:1px solid #262626;border-radius:4px 0px 0px 4px;background:linear-gradient(#6d96d6,#4a72b3);"></div>
<div class="a" style="left:1259px;top:571px;width:90px;height:20px;border:1px solid #262626;border-radius:0px 4px 4px 0px;background:linear-gradient(#575757,#363636);"></div>
<div class="t" style="left:1172px;top:576px;width:87px;text-align:center;color:#000;font-size:11px;">Image</div>
<div class="t" style="left:1259px;top:576px;width:91px;text-align:center;color:#fff;font-size:11px;">Movie Clip</div>
<div class="a" style="left:1172px;top:599px;width:32px;height:20px;border:1px solid #262626;border-radius:4px 0px 0px 4px;background:linear-gradient(#575757,#363636);"></div>
<div class="a" style="left:1203px;top:599px;width:88px;height:20px;border:1px solid #262626;border-radius:0px 0px 0px 0px;background:linear-gradient(#b3b3b3,#a9a9a9);"></div>
<div class="a" style="left:1289px;top:599px;width:21px;height:20px;border:1px solid #262626;border-radius:0px 0px 0px 0px;background:linear-gradient(#aaaaaa,#8c8c8c);"></div>
<div class="a" style="left:1309px;top:599px;width:21px;height:20px;border:1px solid #262626;border-radius:0px 0px 0px 0px;background:linear-gradient(#aaaaaa,#8c8c8c);"></div>
<div class="a" style="left:1330px;top:599px;width:20px;height:20px;border:1px solid #262626;border-radius:0px 4px 4px 0px;background:linear-gradient(#aaaaaa,#8c8c8c);"></div>
<svg class="a" style="left:1176px;top:602px" width="14" height="15" viewBox="0 0 14 15"><path d="M1,1 H9 L13,5 V14 H1 Z" fill="#f4f4f4" stroke="#222" stroke-width="1"/><rect x="2.5" y="4" width="9" height="4" fill="#e0a0a0"/><rect x="2.5" y="9" width="9" height="3" fill="#a0b0d0"/></svg>
<svg class="a" style="left:1193px;top:603px" width="8" height="13" viewBox="0 0 8 13"><polygon points="4,0.5 7.5,5 0.5,5" fill="#ddd"/><polygon points="0.5,8 7.5,8 4,12.5" fill="#ddd"/></svg>
<div class="t" style="left:1209px;top:604px;color:#000;font-size:11px;">MeshmagLO...</div>
<div class="t" style="left:1289px;top:604px;width:20px;text-align:center;color:#000;font-size:11px;">F</div>
<svg class="a" style="left:1311px;top:602px" width="16" height="14" viewBox="0 0 16 14"><rect x="5" y="1" width="8" height="6" fill="#f2f2f2" stroke="#333" stroke-width="0.8"/><path d="M1,4 H6 L7,5.5 H15 V13 H1 Z" fill="#d8c890" stroke="#333" stroke-width="1"/></svg>
<svg class="a" style="left:1333px;top:602px" width="14" height="14" viewBox="0 0 14 14"><g stroke="#222" stroke-width="3.2" stroke-linecap="round"><line x1="2.5" y1="2.5" x2="11.5" y2="11.5"/><line x1="11.5" y1="2.5" x2="2.5" y2="11.5"/></g><g stroke="#fff" stroke-width="1.6" stroke-linecap="round"><line x1="2.5" y1="2.5" x2="11.5" y2="11.5"/><line x1="11.5" y1="2.5" x2="2.5" y2="11.5"/></g></svg>
<div class="t" style="left:1179px;top:632px;color:#000;font-size:11px;">Source:</div>
<div class="a" style="left:1235px;top:627px;width:115px;height:20px;border:1px solid #262626;border-radius:4px 4px 4px 4px;background:linear-gradient(#555555,#393939);"></div>
<div class="t" style="left:1243px;top:632px;color:#fff;font-size:11px;">Single Image</div>
<svg class="a" style="left:1339px;top:631px" width="8" height="13" viewBox="0 0 8 13"><polygon points="4,0.5 7.5,5 0.5,5" fill="#ddd"/><polygon points="0.5,8 7.5,8 4,12.5" fill="#ddd"/></svg>
<div class="a" style="left:1172px;top:655px;width:20px;height:20px;border:1px solid #262626;border-radius:4px 0px 0px 4px;background:linear-gradient(#aaaaaa,#8c8c8c);"></div>
<div class="a" style="left:1190px;top:655px;width:120px;height:20px;border:1px solid #262626;border-radius:0px 0px 0px 0px;background:linear-gradient(#b0b0b0,#a6a6a6);"></div>
<div class="a" style="left:1309px;top:655px;width:21px;height:20px;border:1px solid #262626;border-radius:0px 0px 0px 0px;background:linear-gradient(#aaaaaa,#8c8c8c);"></div>
<div class="a" style="left:1330px;top:655px;width:20px;height:20px;border:1px solid #262626;border-radius:0px 4px 4px 0px;background:linear-gradient(#aaaaaa,#8c8c8c);"></div>
<svg class="a" style="left:1173px;top:658px" width="16" height="14" viewBox="0 0 16 14"><polygon points="1,6 8,2 15,6 15,9 8,13 1,9" fill="#e8d0a0" stroke="#333" stroke-width="1"/><polygon points="4,6 8,4 12,6 8,8" fill="#222"/></svg>
<div class="t" style="left:1197px;top:660px;color:#000;font-size:11px;">//..\02\MeshmagLO...</div>
<svg class="a" style="left:1311px;top:658px" width="16" height="14" viewBox="0 0 16 14"><rect x="5" y="1" width="8" height="6" fill="#f2f2f2" stroke="#333" stroke-width="0.8"/><path d="M1,4 H6 L7,5.5 H15 V13 H1 Z" fill="#d8c890" stroke="#333" stroke-width="1"/></svg>
<svg class="a" style="left:1332px;top:657px" width="16" height="16" viewBox="0 0 16 16"><path d="M3,7 A5,5 0 0 1 12,4 M13,9 A5,5 0 0 1 4,12" fill="none" stroke="#222" stroke-width="3"/><path d="M3,7 A5,5 0 0 1 12,4 M13,9 A5,5 0 0 1 4,12" fill="none" stroke="#fff" stroke-width="1.4"/></svg>
<div class="t" style="left:1179px;top:688px;color:#000;font-size:11px;">Color Spa</div>
<div class="a" style="left:1235px;top:683px;width:115px;height:20px;border:1px solid #262626;border-radius:4px 4px 4px 4px;background:linear-gradient(#555555,#393939);"></div>
<div class="t" style="left:1243px;top:688px;color:#fff;font-size:11px;">sRGB</div>
<svg class="a" style="left:1339px;top:687px" width="8" height="13" viewBox="0 0 8 13"><polygon points="4,0.5 7.5,5 0.5,5" fill="#ddd"/><polygon points="0.5,8 7.5,8 4,12.5" fill="#ddd"/></svg>
<div class="a" style="left:1174px;top:708px;width:14px;height:14px;border:1px solid #262626;border-radius:3px;background:linear-gradient(#393939,#525252)"></div>
<div class="t" style="left:1196px;top:710px;color:#000;font-size:11px;">View as Render</div>
<div class="a" style="left:1172px;top:733px;width:178px;height:20px;border:1px solid #262626;border-radius:9px 9px 9px 9px;background:linear-gradient(#a2a2a2,#b6b6b6);"></div>
<div class="a" style="left:1172px;top:734px;width:92px;height:18px;border-radius:8px 0 0 8px;background:linear-gradient(#6e6e6e,#858585)"></div>
<div class="t" style="left:1186px;top:738px;color:#000;font-size:11px;">Opacity:</div>
<div class="t" style="left:1034px;top:738px;width:300px;text-align:right;color:#000;font-size:11px;">0.500</div>
<div class="a" style="left:1172px;top:755px;width:89px;height:20px;border:1px solid #262626;border-radius:4px 0px 0px 4px;background:linear-gradient(#575757,#363636);"></div>
<div class="a" style="left:1259px;top:755px;width:90px;height:20px;border:1px solid #262626;border-radius:0px 4px 4px 0px;background:linear-gradient(#6d96d6,#4a72b3);"></div>
<div class="t" style="left:1172px;top:760px;width:87px;text-align:center;color:#fff;font-size:11px;">Back</div>
<div class="t" style="left:1259px;top:760px;width:91px;text-align:center;color:#000;font-size:11px;">Front</div>
<div class="a" style="left:1172px;top:777px;width:59px;height:20px;border:1px solid #262626;border-radius:4px 0px 0px 4px;background:linear-gradient(#6d96d6,#4a72b3);"></div>
<div class="a" style="left:1229px;top:777px;width:60px;height:20px;border:1px solid #262626;border-radius:0px 0px 0px 0px;background:linear-gradient(#575757,#363636);"></div>
<div class="a" style="left:1288px;top:777px;width:61px;height:20px;border:1px solid #262626;border-radius:0px 4px 4px 0px;background:linear-gradient(#575757,#363636);"></div>
<div class="t" style="left:1172px;top:782px;width:57px;text-align:center;color:#000;font-size:11px;">Stretch</div>
<div class="t" style="left:1229px;top:782px;width:59px;text-align:center;color:#fff;font-size:11px;">Fit</div>
<div class="t" style="left:1288px;top:782px;width:62px;text-align:center;color:#fff;font-size:11px;">Crop</div>
<div class="a" style="left:1171px;top:799px;width:179px;height:71px;border:1px solid #4e4e4e;border-radius:5px;background:rgba(128,128,128,0.06)"></div>
<div class="a" style="left:1176px;top:807px;width:80px;height:20px;border:1px solid #262626;border-radius:9px 9px 9px 9px;background:linear-gradient(#a2a2a2,#b6b6b6);"></div>
<svg class="a" style="left:1183px;top:813px" width="5" height="8" viewBox="0 0 5 8"><polygon points="4.5,0.5 4.5,7.5 0.5,4" fill="#666"/></svg>
<svg class="a" style="left:1246px;top:813px" width="5" height="8" viewBox="0 0 5 8"><polygon points="0.5,0.5 0.5,7.5 4.5,4" fill="#666"/></svg>
<div class="t" style="left:1192px;top:812px;color:#000;font-size:11px;">X:</div>
<div class="t" style="left:941px;top:812px;width:300px;text-align:right;color:#000;font-size:11px;">0.000</div>
<div class="a" style="left:1264px;top:807px;width:81px;height:20px;border:1px solid #262626;border-radius:9px 9px 9px 9px;background:linear-gradient(#a2a2a2,#b6b6b6);"></div>
<svg class="a" style="left:1271px;top:813px" width="5" height="8" viewBox="0 0 5 8"><polygon points="4.5,0.5 4.5,7.5 0.5,4" fill="#666"/></svg>
<svg class="a" style="left:1334px;top:813px" width="5" height="8" viewBox="0 0 5 8"><polygon points="0.5,0.5 0.5,7.5 4.5,4" fill="#666"/></svg>
<div class="t" style="left:1280px;top:812px;color:#000;font-size:11px;">Y:</div>
<div class="t" style="left:1030px;top:812px;width:300px;text-align:right;color:#000;font-size:11px;">0.000</div>
<div class="a" style="left:1179px;top:838px;width:14px;height:14px;border:1px solid #262626;border-radius:3px;background:linear-gradient(#393939,#525252)"></div>
<div class="t" style="left:1201px;top:840px;color:#000;font-size:11px;">Flip Horizo</div>
<div class="a" style="left:1267px;top:838px;width:14px;height:14px;border:1px solid #262626;border-radius:3px;background:linear-gradient(#393939,#525252)"></div>
<div class="t" style="left:1289px;top:840px;color:#000;font-size:11px;">Flip Vertic</div>
<div class="a" style="left:1363px;top:5px;width:13px;height:847px;border-radius:6px;background:#5c5c5c;box-shadow:inset 1px 0 0 #555"></div>
<div class="a" style="left:1364px;top:380px;width:11px;height:425px;border-radius:6px;background:linear-gradient(90deg,#858585,#9a9a9a 50%,#888)"></div>
<svg class="a" style="left:1364px;top:0" width="16" height="14" viewBox="0 0 16 14"><g stroke="#fff" stroke-width="1" opacity="0.8"><line x1="5" y1="0" x2="16" y2="11"/><line x1="9" y1="0" x2="16" y2="7"/><line x1="13" y1="0" x2="16" y2="3"/></g><g stroke="#222" stroke-width="1" opacity="0.8"><line x1="6" y1="0" x2="16" y2="10"/><line x1="10" y1="0" x2="16" y2="6"/><line x1="14" y1="0" x2="16" y2="2"/></g></svg>
<div class="a" style="left:1380px;top:0px;width:1px;height:975px;background:#000"></div>
<!-- ============ 3D HEADER ============ -->
<div class="a" style="left:0px;top:856px;width:1380px;height:26px;background:#727272"></div>
<div class="a" style="left:0px;top:856px;width:1380px;height:1px;background:#8c8c8c"></div>
<div class="a" style="left:0px;top:882px;width:1380px;height:1px;background:#000"></div>
<div class="t" style="left:-1px;top:864px;color:#000;font-size:11px;">d</div>
<div class="t" style="left:27px;top:864px;color:#000;font-size:11px;">Mesh</div>
<div class="a" style="left:65px;top:859px;width:99px;height:20px;border:1px solid #262626;border-radius:4px 4px 4px 4px;background:linear-gradient(#555555,#393939);"></div>
<svg class="a" style="left:69px;top:861px" width="16" height="16" viewBox="0 0 16 16"><polygon points="8,2 14,5 14,12 8,15 2,12 2,5" fill="#9a9a9a" stroke="#333" stroke-width="0.8"/><polygon points="8,8 14,5 14,12 8,15" fill="#6a6a6a"/><g fill="#f3c070" stroke="#8a2a10" stroke-width="1"><rect x="2" y="3" width="3" height="3"/><rect x="9" y="5" width="3" height="3"/><rect x="2" y="11" width="3" height="3"/><rect x="9" y="12" width="3" height="3"/></g></svg>
<div class="t" style="left:89px;top:864px;color:#fff;font-size:11px;">Edit Mode</div>
<svg class="a" style="left:154px;top:863px" width="8" height="13" viewBox="0 0 8 13"><polygon points="4,0.5 7.5,5 0.5,5" fill="#ddd"/><polygon points="0.5,8 7.5,8 4,12.5" fill="#ddd"/></svg>
<div class="a" style="left:169px;top:859px;width:35px;height:20px;border:1px solid #262626;border-radius:4px 4px 4px 4px;background:linear-gradient(#555555,#393939);"></div>
<svg class="a" style="left:174px;top:862px" width="14" height="14" viewBox="0 0 14 14"><defs><radialGradient id="sph" cx="0.4" cy="0.35" r="0.7"><stop offset="0" stop-color="#fff"/><stop offset="0.6" stop-color="#ddd"/><stop offset="1" stop-color="#888"/></radialGradient></defs><circle cx="7" cy="7" r="6" fill="url(#sph)" stroke="#222" stroke-width="0.8"/></svg>
<svg class="a" style="left:194px;top:863px" width="8" height="13" viewBox="0 0 8 13"><polygon points="4,0.5 7.5,5 0.5,5" fill="#ddd"/><polygon points="0.5,8 7.5,8 4,12.5" fill="#ddd"/></svg>
<div class="a" style="left:209px;top:859px;width:35px;height:20px;border:1px solid #262626;border-radius:4px 4px 4px 4px;background:linear-gradient(#555555,#393939);"></div>
<svg class="a" style="left:213px;top:861px" width="16" height="16" viewBox="0 0 16 16"><circle cx="5.5" cy="5" r="4" fill="#eee" stroke="#222" stroke-width="0.8"/><circle cx="10" cy="10.5" r="4" fill="#ddd" stroke="#222" stroke-width="0.8"/><rect x="6" y="6" width="4" height="4" fill="#fff" stroke="#1850d0" stroke-width="1.3"/></svg>
<svg class="a" style="left:234px;top:863px" width="8" height="13" viewBox="0 0 8 13"><polygon points="4,0.5 7.5,5 0.5,5" fill="#ddd"/><polygon points="0.5,8 7.5,8 4,12.5" fill="#ddd"/></svg>
<div class="a" style="left:249px;top:859px;width:20px;height:20px;border:1px solid #262626;border-radius:4px 0px 0px 4px;background:linear-gradient(#575757,#363636);"></div>
<div class="a" style="left:269px;top:859px;width:21px;height:20px;border:1px solid #262626;border-radius:0px 0px 0px 0px;background:linear-gradient(#6d96d6,#4a72b3);"></div>
<div class="a" style="left:288px;top:859px;width:21px;height:20px;border:1px solid #262626;border-radius:0px 0px 0px 0px;background:linear-gradient(#575757,#363636);"></div>
<div class="a" style="left:308px;top:859px;width:21px;height:20px;border:1px solid #262626;border-radius:0px 0px 0px 0px;background:linear-gradient(#575757,#363636);"></div>
<div class="a" style="left:328px;top:859px;width:73px;height:20px;border:1px solid #262626;border-radius:0px 4px 4px 0px;background:linear-gradient(#555555,#393939);"></div>
<svg class="a" style="left:251px;top:861px" width="16" height="16" viewBox="0 0 16 16"><line x1="8" y1="9" x2="8" y2="1.5" stroke="#3a5ae0" stroke-width="2"/><line x1="8" y1="9" x2="2" y2="13.5" stroke="#e03030" stroke-width="2"/><line x1="8" y1="9" x2="14" y2="13.5" stroke="#60c030" stroke-width="2"/><circle cx="8" cy="2" r="1.3" fill="#fff"/><circle cx="2" cy="13.5" r="1.3" fill="#fff"/><circle cx="14" cy="13.5" r="1.3" fill="#fff"/></svg>
<svg class="a" style="left:271px;top:861px" width="16" height="16" viewBox="0 0 16 16"><line x1="3" y1="13" x2="11" y2="5" stroke="#1a2a5a" stroke-width="3.5"/><line x1="3" y1="13" x2="11" y2="5" stroke="#a8c8f8" stroke-width="1.8"/><polygon points="14,2 13,9 7,3" fill="#a8c8f8" stroke="#1a2a5a" stroke-width="1"/></svg>
<svg class="a" style="left:290px;top:861px" width="16" height="16" viewBox="0 0 16 16"><path d="M3,14 Q4,5 13,3" fill="none" stroke="#1a2a4a" stroke-width="3"/><path d="M3,14 Q4,5 13,3" fill="none" stroke="#5a7ab8" stroke-width="1.6"/></svg>
<svg class="a" style="left:310px;top:861px" width="16" height="16" viewBox="0 0 16 16"><line x1="3" y1="14" x2="9" y2="8" stroke="#5a7ab8" stroke-width="2"/><rect x="8" y="2" width="6" height="6" fill="#5a7ab8" stroke="#1a2a4a" stroke-width="0.8"/></svg>
<div class="t" style="left:336px;top:864px;color:#fff;font-size:11px;">Global</div>
<svg class="a" style="left:390px;top:863px" width="8" height="13" viewBox="0 0 8 13"><polygon points="4,0.5 7.5,5 0.5,5" fill="#ddd"/><polygon points="0.5,8 7.5,8 4,12.5" fill="#ddd"/></svg>
<div class="a" style="left:406px;top:859px;width:20px;height:20px;border:1px solid #262626;border-radius:4px 0px 0px 4px;background:linear-gradient(#6a6a6a,#5a5a5a);"></div>
<div class="a" style="left:425px;top:859px;width:21px;height:20px;border:1px solid #262626;border-radius:0px 0px 0px 0px;background:linear-gradient(#aaaaaa,#8c8c8c);"></div>
<div class="a" style="left:445px;top:859px;width:20px;height:20px;border:1px solid #262626;border-radius:0px 4px 4px 0px;background:linear-gradient(#aaaaaa,#8c8c8c);"></div>
<svg class="a" style="left:408px;top:861px" width="16" height="16" viewBox="0 0 16 16"><polygon points="8,1.5 14,4.5 14,11.5 8,14.5 2,11.5 2,4.5" fill="#c8c8c8" stroke="#333" stroke-width="0.8"/><polygon points="8,7.5 14,4.5 14,11.5 8,14.5" fill="#9a9a9a"/><polygon points="2,4.5 8,7.5 8,14.5 2,11.5" fill="#b0b0b0"/><circle cx="3" cy="3.5" r="1.8" fill="#f0a040" stroke="#602010" stroke-width="0.6"/></svg>
<svg class="a" style="left:427px;top:861px" width="16" height="16" viewBox="0 0 16 16"><polygon points="8,1.5 14,4.5 14,11.5 8,14.5 2,11.5 2,4.5" fill="#c8c8c8" stroke="#333" stroke-width="0.8"/><polygon points="8,7.5 14,4.5 14,11.5 8,14.5" fill="#9a9a9a"/><polygon points="2,4.5 8,7.5 8,14.5 2,11.5" fill="#b0b0b0"/><line x1="3" y1="5" x2="3" y2="11" stroke="#d09060" stroke-width="2"/></svg>
<svg class="a" style="left:447px;top:861px" width="16" height="16" viewBox="0 0 16 16"><polygon points="8,1.5 14,4.5 14,11.5 8,14.5 2,11.5 2,4.5" fill="#c8c8c8" stroke="#333" stroke-width="0.8"/><polygon points="8,7.5 14,4.5 14,11.5 8,14.5" fill="#9a9a9a"/><polygon points="2,4.5 8,7.5 8,14.5 2,11.5" fill="#d0a070"/></svg>
<div class="a" style="left:471px;top:859px;width:19px;height:20px;border:1px solid #262626;border-radius:4px 4px 4px 4px;background:linear-gradient(#aaaaaa,#8c8c8c);"></div>
<svg class="a" style="left:473px;top:861px" width="16" height="16" viewBox="0 0 16 16"><rect x="3" y="3" width="10" height="10" fill="none" stroke="#222" stroke-width="1" stroke-dasharray="2 1.5"/><g fill="#fff" stroke="#111" stroke-width="1"><circle cx="3" cy="3" r="1.7"/><circle cx="13" cy="3" r="1.7"/><circle cx="3" cy="13" r="1.7"/><circle cx="13" cy="13" r="1.7"/><circle cx="3" cy="8" r="1.7"/><circle cx="13" cy="8" r="1.7"/></g></svg>
<div class="a" style="left:496px;top:859px;width:34px;height:20px;border:1px solid #262626;border-radius:4px 4px 4px 4px;background:linear-gradient(#555555,#393939);"></div>
<svg class="a" style="left:502px;top:862px" width="14" height="14" viewBox="0 0 14 14"><circle cx="7" cy="7" r="5.5" fill="#555" stroke="#444" stroke-width="1"/><circle cx="7" cy="7" r="3" fill="#444" stroke="#5e5e5e" stroke-width="1"/></svg>
<svg class="a" style="left:521px;top:863px" width="8" height="13" viewBox="0 0 8 13"><polygon points="4,0.5 7.5,5 0.5,5" fill="#bbb"/><polygon points="0.5,8 7.5,8 4,12.5" fill="#bbb"/></svg>
<div class="a" style="left:536px;top:859px;width:20px;height:20px;border:1px solid #262626;border-radius:4px 0px 0px 4px;background:linear-gradient(#aaaaaa,#8c8c8c);"></div>
<div class="a" style="left:555px;top:859px;width:36px;height:20px;border:1px solid #262626;border-radius:0px 0px 0px 0px;background:linear-gradient(#555555,#393939);"></div>
<div class="a" style="left:591px;top:859px;width:20px;height:20px;border:1px solid #262626;border-radius:0px 4px 4px 0px;background:linear-gradient(#aaaaaa,#8c8c8c);"></div>
<svg class="a" style="left:538px;top:861px" width="16" height="16" viewBox="0 0 16 16"><path d="M3,13 L9,6 A3,3 0 0 1 13,10 L7,15" fill="none" stroke="#666" stroke-width="3.5"/><path d="M3,13 L9,6 A3,3 0 0 1 13,10 L7,15" fill="none" stroke="#ccc" stroke-width="1.6"/></svg>
<svg class="a" style="left:559px;top:862px" width="16" height="14" viewBox="0 0 16 14"><g stroke="#ddd" stroke-width="1"><line x1="1" y1="7" x2="15" y2="7"/><line x1="2" y1="3" x2="2" y2="11"/><line x1="14" y1="3" x2="14" y2="11"/><line x1="5" y1="4" x2="5" y2="10"/><line x1="11" y1="4" x2="11" y2="10"/></g><rect x="6.5" y="1" width="3" height="12" rx="1" fill="#6a9ae0" stroke="#fff" stroke-width="0.8"/></svg>
<svg class="a" style="left:580px;top:863px" width="8" height="13" viewBox="0 0 8 13"><polygon points="4,0.5 7.5,5 0.5,5" fill="#ddd"/><polygon points="0.5,8 7.5,8 4,12.5" fill="#ddd"/></svg>
<svg class="a" style="left:593px;top:861px" width="16" height="16" viewBox="0 0 16 16"><g stroke="#222" stroke-width="1"><line x1="5" y1="6" x2="16" y2="6"/><line x1="5" y1="11" x2="16" y2="11"/><line x1="8" y1="4" x2="8" y2="16"/><line x1="13" y1="4" x2="13" y2="16"/></g><circle cx="5" cy="5" r="4" fill="#fff" stroke="#1a4aa0" stroke-width="1.2"/><circle cx="5" cy="5" r="1.6" fill="#2a6ae0"/></svg>
<div class="a" style="left:616px;top:859px;width:19px;height:20px;border:1px solid #262626;border-radius:4px 4px 4px 4px;background:linear-gradient(#aaaaaa,#8c8c8c);"></div>
<svg class="a" style="left:618px;top:861px" width="16" height="16" viewBox="0 0 16 16"><g stroke="#333" stroke-width="2.6"><line x1="2" y1="14" x2="7" y2="9"/><line x1="9" y1="7" x2="14" y2="2"/></g><g stroke="#fff" stroke-width="1.2"><line x1="2" y1="14" x2="7" y2="9"/><line x1="9" y1="7" x2="14" y2="2"/></g><circle cx="2.5" cy="13.5" r="1.5" fill="#f0a040"/><circle cx="13.5" cy="2.5" r="1.5" fill="#f0a040"/></svg>
<div class="a" style="left:641px;top:859px;width:20px;height:20px;border:1px solid #262626;border-radius:4px 0px 0px 4px;background:linear-gradient(#aaaaaa,#8c8c8c);"></div>
<div class="a" style="left:660px;top:859px;width:20px;height:20px;border:1px solid #262626;border-radius:0px 4px 4px 0px;background:linear-gradient(#aaaaaa,#8c8c8c);"></div>
<svg class="a" style="left:643px;top:861px" width="17" height="16" viewBox="0 0 17 16"><rect x="1" y="5" width="14" height="10" rx="1" fill="#ddd" stroke="#222" stroke-width="1"/><rect x="3" y="3" width="4" height="3" fill="#ccc" stroke="#222" stroke-width="0.8"/><circle cx="9" cy="10" r="3.5" fill="#333" stroke="#fff" stroke-width="0.8"/><circle cx="9" cy="10" r="1.5" fill="#c03030"/><circle cx="3" cy="7" r="0.8" fill="#e03030"/><circle cx="14" cy="3.5" r="3" fill="#f5b030"/><path d="M14,1.5 V5.5 M12,3.5 H16" stroke="#fff" stroke-width="1"/></svg>
<svg class="a" style="left:662px;top:861px" width="17" height="16" viewBox="0 0 17 16"><rect x="2" y="7" width="13" height="8" fill="#333" stroke="#111" stroke-width="0.8"/><polygon points="2,6 14,2 15,5 3,9" fill="#eee" stroke="#111" stroke-width="0.8"/><g stroke="#111" stroke-width="1.2"><line x1="5" y1="5" x2="6" y2="8"/><line x1="9" y1="3.7" x2="10" y2="6.7"/></g><rect x="1" y="6" width="2" height="5" fill="#6aa0e0"/><line x1="4" y1="11" x2="14" y2="11" stroke="#aaa" stroke-width="0.8"/></svg>
<!-- ============ TIMELINE ============ -->
<div class="a" style="left:0px;top:883px;width:1380px;height:48px;background:#737373"></div>
<div class="a" style="left:0px;top:883px;width:102px;height:48px;background:#444444"></div>
<div class="a" style="left:1230px;top:883px;width:150px;height:48px;background:#444444"></div>
<div class="a" style="left:11px;top:883px;width:1px;height:48px;background:#383838"></div>
<div class="a" style="left:33px;top:883px;width:1px;height:48px;background:#383838"></div>
<div class="a" style="left:56px;top:883px;width:1px;height:48px;background:#383838"></div>
<div class="a" style="left:79px;top:883px;width:1px;height:48px;background:#383838"></div>
<div class="a" style="left:101px;top:883px;width:1px;height:48px;background:#383838"></div>
<div class="a" style="left:124px;top:883px;width:1px;height:48px;background:#676767"></div>
<div class="a" style="left:146px;top:883px;width:1px;height:48px;background:#676767"></div>
<div class="a" style="left:169px;top:883px;width:1px;height:48px;background:#676767"></div>
<div class="a" style="left:191px;top:883px;width:1px;height:48px;background:#676767"></div>
<div class="a" style="left:214px;top:883px;width:1px;height:48px;background:#676767"></div>
<div class="a" style="left:237px;top:883px;width:1px;height:48px;background:#676767"></div>
<div class="a" style="left:259px;top:883px;width:1px;height:48px;background:#676767"></div>
<div class="a" style="left:282px;top:883px;width:1px;height:48px;background:#676767"></div>
<div class="a" style="left:304px;top:883px;width:1px;height:48px;background:#676767"></div>
<div class="a" style="left:327px;top:883px;width:1px;height:48px;background:#676767"></div>
<div class="a" style="left:349px;top:883px;width:1px;height:48px;background:#676767"></div>
<div class="a" style="left:372px;top:883px;width:1px;height:48px;background:#676767"></div>
<div class="a" style="left:395px;top:883px;width:1px;height:48px;background:#676767"></div>
<div class="a" style="left:417px;top:883px;width:1px;height:48px;background:#676767"></div>
<div class="a" style="left:440px;top:883px;width:1px;height:48px;background:#676767"></div>
<div class="a" style="left:462px;top:883px;width:1px;height:48px;background:#676767"></div>
<div class="a" style="left:485px;top:883px;width:1px;height:48px;background:#676767"></div>
<div class="a" style="left:507px;top:883px;width:1px;height:48px;background:#676767"></div>
<div class="a" style="left:530px;top:883px;width:1px;height:48px;background:#676767"></div>
<div class="a" style="left:553px;top:883px;width:1px;height:48px;background:#676767"></div>
<div class="a" style="left:575px;top:883px;width:1px;height:48px;background:#676767"></div>
<div class="a" style="left:598px;top:883px;width:1px;height:48px;background:#676767"></div>
<div class="a" style="left:620px;top:883px;width:1px;height:48px;background:#676767"></div>
<div class="a" style="left:643px;top:883px;width:1px;height:48px;background:#676767"></div>
<div class="a" style="left:665px;top:883px;width:1px;height:48px;background:#676767"></div>
<div class="a" style="left:688px;top:883px;width:1px;height:48px;background:#676767"></div>
<div class="a" style="left:711px;top:883px;width:1px;height:48px;background:#676767"></div>
<div class="a" style="left:733px;top:883px;width:1px;height:48px;background:#676767"></div>
<div class="a" style="left:756px;top:883px;width:1px;height:48px;background:#676767"></div>
<div class="a" style="left:778px;top:883px;width:1px;height:48px;background:#676767"></div>
<div class="a" style="left:801px;top:883px;width:1px;height:48px;background:#676767"></div>
<div class="a" style="left:823px;top:883px;width:1px;height:48px;background:#676767"></div>
<div class="a" style="left:846px;top:883px;width:1px;height:48px;background:#676767"></div>
<div class="a" style="left:869px;top:883px;width:1px;height:48px;background:#676767"></div>
<div class="a" style="left:891px;top:883px;width:1px;height:48px;background:#676767"></div>
<div class="a" style="left:914px;top:883px;width:1px;height:48px;background:#676767"></div>
<div class="a" style="left:936px;top:883px;width:1px;height:48px;background:#676767"></div>
<div class="a" style="left:959px;top:883px;width:1px;height:48px;background:#676767"></div>
<div class="a" style="left:981px;top:883px;width:1px;height:48px;background:#676767"></div>
<div class="a" style="left:1004px;top:883px;width:1px;height:48px;background:#676767"></div>
<div class="a" style="left:1027px;top:883px;width:1px;height:48px;background:#676767"></div>
<div class="a" style="left:1049px;top:883px;width:1px;height:48px;background:#676767"></div>
<div class="a" style="left:1072px;top:883px;width:1px;height:48px;background:#676767"></div>
<div class="a" style="left:1094px;top:883px;width:1px;height:48px;background:#676767"></div>
<div class="a" style="left:1117px;top:883px;width:1px;height:48px;background:#676767"></div>
<div class="a" style="left:1139px;top:883px;width:1px;height:48px;background:#676767"></div>
<div class="a" style="left:1162px;top:883px;width:1px;height:48px;background:#676767"></div>
<div class="a" style="left:1185px;top:883px;width:1px;height:48px;background:#676767"></div>
<div class="a" style="left:1207px;top:883px;width:1px;height:48px;background:#676767"></div>
<div class="a" style="left:1230px;top:883px;width:1px;height:48px;background:#383838"></div>
<div class="a" style="left:1252px;top:883px;width:1px;height:48px;background:#383838"></div>
<div class="a" style="left:1275px;top:883px;width:1px;height:48px;background:#383838"></div>
<div class="a" style="left:1297px;top:883px;width:1px;height:48px;background:#383838"></div>
<div class="a" style="left:1320px;top:883px;width:1px;height:48px;background:#383838"></div>
<div class="a" style="left:1343px;top:883px;width:1px;height:48px;background:#383838"></div>
<div class="a" style="left:1365px;top:883px;width:1px;height:48px;background:#383838"></div>
<div class="a" style="left:101px;top:883px;width:1px;height:48px;background:#2a2a2a"></div>
<div class="a" style="left:105px;top:883px;width:3px;height:48px;background:#5fc43a"></div>
<div class="a" style="left:0px;top:931px;width:1380px;height:18px;background:#7a7a7a"></div>
<div class="a" style="left:0px;top:931px;width:1375px;height:14px;border-top:1px solid #555;border-bottom:1px solid #555;border-right:1px solid #555;border-radius:0 7px 7px 0;background:linear-gradient(#a5a5a5,#8e8e8e)"></div>
<div class="t" style="left:-9px;top:933px;width:40px;text-align:center;color:#000;font-size:11px;">-20</div>
<div class="t" style="left:36px;top:933px;width:40px;text-align:center;color:#000;font-size:11px;">-10</div>
<div class="t" style="left:83px;top:933px;width:40px;text-align:center;color:#000;font-size:11px;">0</div>
<div class="t" style="left:128px;top:933px;width:40px;text-align:center;color:#000;font-size:11px;">10</div>
<div class="t" style="left:173px;top:933px;width:40px;text-align:center;color:#000;font-size:11px;">20</div>
<div class="t" style="left:218px;top:933px;width:40px;text-align:center;color:#000;font-size:11px;">30</div>
<div class="t" style="left:263px;top:933px;width:40px;text-align:center;color:#000;font-size:11px;">40</div>
<div class="t" style="left:308px;top:933px;width:40px;text-align:center;color:#000;font-size:11px;">50</div>
<div class="t" style="left:353px;top:933px;width:40px;text-align:center;color:#000;font-size:11px;">60</div>
<div class="t" style="left:397px;top:933px;width:40px;text-align:center;color:#000;font-size:11px;">70</div>
<div class="t" style="left:442px;top:933px;width:40px;text-align:center;color:#000;font-size:11px;">80</div>
<div class="t" style="left:487px;top:933px;width:40px;text-align:center;color:#000;font-size:11px;">90</div>
<div class="t" style="left:532px;top:933px;width:40px;text-align:center;color:#000;font-size:11px;">100</div>
<div class="t" style="left:577px;top:933px;width:40px;text-align:center;color:#000;font-size:11px;">110</div>
<div class="t" style="left:622px;top:933px;width:40px;text-align:center;color:#000;font-size:11px;">120</div>
<div class="t" style="left:667px;top:933px;width:40px;text-align:center;color:#000;font-size:11px;">130</div>
<div class="t" style="left:711px;top:933px;width:40px;text-align:center;color:#000;font-size:11px;">140</div>
<div class="t" style="left:756px;top:933px;width:40px;text-align:center;color:#000;font-size:11px;">150</div>
<div class="t" style="left:801px;top:933px;width:40px;text-align:center;color:#000;font-size:11px;">160</div>
<div class="t" style="left:846px;top:933px;width:40px;text-align:center;color:#000;font-size:11px;">170</div>
<div class="t" style="left:891px;top:933px;width:40px;text-align:center;color:#000;font-size:11px;">180</div>
<div class="t" style="left:936px;top:933px;width:40px;text-align:center;color:#000;font-size:11px;">190</div>
<div class="t" style="left:981px;top:933px;width:40px;text-align:center;color:#000;font-size:11px;">200</div>
<div class="t" style="left:1025px;top:933px;width:40px;text-align:center;color:#000;font-size:11px;">210</div>
<div class="t" style="left:1070px;top:933px;width:40px;text-align:center;color:#000;font-size:11px;">220</div>
<div class="t" style="left:1115px;top:933px;width:40px;text-align:center;color:#000;font-size:11px;">230</div>
<div class="t" style="left:1160px;top:933px;width:40px;text-align:center;color:#000;font-size:11px;">240</div>
<div class="t" style="left:1205px;top:933px;width:40px;text-align:center;color:#000;font-size:11px;">250</div>
<div class="t" style="left:1250px;top:933px;width:40px;text-align:center;color:#000;font-size:11px;">260</div>
<div class="t" style="left:1295px;top:933px;width:40px;text-align:center;color:#000;font-size:11px;">270</div>
<div class="t" style="left:1339px;top:933px;width:40px;text-align:center;color:#000;font-size:11px;">280</div>
<div class="a" style="left:0px;top:945px;width:1380px;height:4px;background:#7e7e7e"></div>
<div class="a" style="left:0px;top:948px;width:1380px;height:1px;background:#5e5e5e"></div>
<div class="a" style="left:0px;top:949px;width:1380px;height:26px;background:#727272"></div>
<svg class="a" style="left:1366px;top:883px" width="14" height="14" viewBox="0 0 14 14"><g stroke="#ddd" stroke-width="1" opacity="0.8"><line x1="2" y1="0" x2="14" y2="12"/><line x1="6" y1="0" x2="14" y2="8"/><line x1="10" y1="0" x2="14" y2="4"/></g><g stroke="#222" stroke-width="1" opacity="0.6"><line x1="3" y1="0" x2="14" y2="11"/><line x1="7" y1="0" x2="14" y2="7"/></g></svg>
<div class="t" style="left:-1px;top:957px;color:#000;font-size:11px;">rame</div>
<div class="t" style="left:43px;top:957px;color:#000;font-size:11px;">Playback</div>
<div class="a" style="left:102px;top:952px;width:20px;height:20px;border:1px solid #262626;border-radius:4px 0px 0px 4px;background:linear-gradient(#aaaaaa,#8c8c8c);"></div>
<div class="a" style="left:121px;top:952px;width:20px;height:20px;border:1px solid #262626;border-radius:0px 4px 4px 0px;background:linear-gradient(#aaaaaa,#8c8c8c);"></div>
<svg class="a" style="left:104px;top:954px" width="15" height="15" viewBox="0 0 15 15"><circle cx="7.5" cy="7.5" r="6" fill="#f5f5f5" stroke="#222" stroke-width="1"/><path d="M7.5,7.5 V1.5 A6,6 0 0 1 13.5,7.5 Z" fill="#f59a10"/><line x1="7.5" y1="7.5" x2="4" y2="11" stroke="#d02020" stroke-width="1"/><line x1="7.5" y1="7.5" x2="13" y2="7.5" stroke="#222" stroke-width="1"/></svg>
<svg class="a" style="left:124px;top:954px" width="13" height="15" viewBox="0 0 13 15"><path d="M3.5,7 V4.5 A3,3 0 0 1 9.5,4.5 V7" fill="none" stroke="#222" stroke-width="2.4"/><path d="M3.5,7 V4.5 A3,3 0 0 1 9.5,4.5 V7" fill="none" stroke="#eee" stroke-width="1"/><rect x="1.5" y="7" width="10" height="7" fill="#eee" stroke="#222" stroke-width="1"/><rect x="6" y="9.5" width="1.2" height="2.5" fill="#222"/></svg>
<div class="a" style="left:147px;top:952px;width:117px;height:20px;border:1px solid #262626;border-radius:9px 0px 0px 9px;background:linear-gradient(#a2a2a2,#b6b6b6);"></div>
<div class="a" style="left:262px;top:952px;width:111px;height:20px;border:1px solid #262626;border-radius:0px 9px 9px 0px;background:linear-gradient(#a2a2a2,#b6b6b6);"></div>
<svg class="a" style="left:153px;top:958px" width="5" height="8" viewBox="0 0 5 8"><polygon points="4.5,0.5 4.5,7.5 0.5,4" fill="#666"/></svg>
<div class="t" style="left:165px;top:957px;color:#000;font-size:11px;">Start:</div>
<div class="t" style="left:-53px;top:957px;width:300px;text-align:right;color:#000;font-size:11px;">1</div>
<svg class="a" style="left:254px;top:958px" width="5" height="8" viewBox="0 0 5 8"><polygon points="0.5,0.5 0.5,7.5 4.5,4" fill="#666"/></svg>
<svg class="a" style="left:268px;top:958px" width="5" height="8" viewBox="0 0 5 8"><polygon points="4.5,0.5 4.5,7.5 0.5,4" fill="#666"/></svg>
<div class="t" style="left:278px;top:957px;color:#000;font-size:11px;">End:</div>
<div class="t" style="left:57px;top:957px;width:300px;text-align:right;color:#000;font-size:11px;">250</div>
<svg class="a" style="left:365px;top:958px" width="5" height="8" viewBox="0 0 5 8"><polygon points="0.5,0.5 0.5,7.5 4.5,4" fill="#666"/></svg>
<div class="a" style="left:379px;top:952px;width:89px;height:20px;border:1px solid #262626;border-radius:9px 9px 9px 9px;background:linear-gradient(#a2a2a2,#b6b6b6);"></div>
<svg class="a" style="left:387px;top:958px" width="5" height="8" viewBox="0 0 5 8"><polygon points="4.5,0.5 4.5,7.5 0.5,4" fill="#666"/></svg>
<div class="t" style="left:153px;top:957px;width:300px;text-align:right;color:#000;font-size:11px;">1</div>
<svg class="a" style="left:460px;top:958px" width="5" height="8" viewBox="0 0 5 8"><polygon points="0.5,0.5 0.5,7.5 4.5,4" fill="#666"/></svg>
<div class="a" style="left:485px;top:952px;width:20px;height:20px;border:1px solid #262626;border-radius:4px 0px 0px 4px;background:linear-gradient(#aaaaaa,#8c8c8c);"></div>
<div class="a" style="left:504px;top:952px;width:21px;height:20px;border:1px solid #262626;border-radius:0px 0px 0px 0px;background:linear-gradient(#aaaaaa,#8c8c8c);"></div>
<div class="a" style="left:524px;top:952px;width:21px;height:20px;border:1px solid #262626;border-radius:0px 0px 0px 0px;background:linear-gradient(#aaaaaa,#8c8c8c);"></div>
<div class="a" style="left:544px;top:952px;width:21px;height:20px;border:1px solid #262626;border-radius:0px 0px 0px 0px;background:linear-gradient(#aaaaaa,#8c8c8c);"></div>
<div class="a" style="left:565px;top:952px;width:21px;height:20px;border:1px solid #262626;border-radius:0px 0px 0px 0px;background:linear-gradient(#aaaaaa,#8c8c8c);"></div>
<div class="a" style="left:585px;top:952px;width:20px;height:20px;border:1px solid #262626;border-radius:0px 4px 4px 0px;background:linear-gradient(#aaaaaa,#8c8c8c);"></div>
<svg class="a" style="left:487px;top:954px" width="15" height="15" viewBox="0 0 15 15"><g fill="#f0f0f0" stroke="#111" stroke-width="1.1" stroke-linejoin="round"><path d="M2,2 V13 M13,2 L4,7.5 L13,13 Z M8,4.5 L4,7.5 L8,10.5" /></g></svg>
<svg class="a" style="left:507px;top:954px" width="15" height="15" viewBox="0 0 15 15"><g fill="#f0f0f0" stroke="#111" stroke-width="1.1" stroke-linejoin="round"><path d="M7,2 L1,7.5 L7,13 Z M13,2 L7,7.5 L13,13 Z"/></g></svg>
<svg class="a" style="left:527px;top:954px" width="15" height="15" viewBox="0 0 15 15"><g fill="#f0f0f0" stroke="#111" stroke-width="1.1" stroke-linejoin="round"><path d="M12,1.5 L2,7.5 L12,13.5 Z"/></g></svg>
<svg class="a" style="left:547px;top:954px" width="15" height="15" viewBox="0 0 15 15"><g fill="#f0f0f0" stroke="#111" stroke-width="1.1" stroke-linejoin="round"><path d="M3,1.5 L13,7.5 L3,13.5 Z"/></g></svg>
<svg class="a" style="left:567px;top:954px" width="15" height="15" viewBox="0 0 15 15"><g fill="#f0f0f0" stroke="#111" stroke-width="1.1" stroke-linejoin="round"><path d="M2,2 L8,7.5 L2,13 Z M8,2 L14,7.5 L8,13 Z"/></g></svg>
<svg class="a" style="left:587px;top:954px" width="15" height="15" viewBox="0 0 15 15"><g fill="#f0f0f0" stroke="#111" stroke-width="1.1" stroke-linejoin="round"><path d="M13,2 V13 M2,2 L11,7.5 L2,13 Z M7,4.5 L11,7.5 L7,10.5"/></g></svg>
<div class="a" style="left:610px;top:952px;width:115px;height:20px;border:1px solid #262626;border-radius:4px 4px 4px 4px;background:linear-gradient(#555555,#393939);"></div>
<div class="t" style="left:618px;top:957px;color:#fff;font-size:11px;">No Sync</div>
<svg class="a" style="left:713px;top:956px" width="8" height="13" viewBox="0 0 8 13"><polygon points="4,0.5 7.5,5 0.5,5" fill="#ddd"/><polygon points="0.5,8 7.5,8 4,12.5" fill="#ddd"/></svg>
<div class="a" style="left:741px;top:952px;width:19px;height:20px;border:1px solid #262626;border-radius:4px 4px 4px 4px;background:linear-gradient(#aaaaaa,#8c8c8c);"></div>
<svg class="a" style="left:744px;top:955px" width="14" height="14" viewBox="0 0 14 14"><circle cx="7" cy="7" r="5" fill="#e03a20" stroke="#5a1a10" stroke-width="1"/><circle cx="6" cy="6" r="2" fill="#f57a50"/></svg>
<div class="a" style="left:766px;top:952px;width:34px;height:20px;border:1px solid #262626;border-radius:4px 4px 4px 4px;background:linear-gradient(#555555,#393939);"></div>
<svg class="a" style="left:771px;top:955px" width="14" height="14" viewBox="0 0 14 14"><polygon points="7,1.5 12.5,7 7,12.5 1.5,7" fill="#f5b020" stroke="#222" stroke-width="0.8"/></svg>
<svg class="a" style="left:790px;top:956px" width="8" height="13" viewBox="0 0 8 13"><polygon points="4,0.5 7.5,5 0.5,5" fill="#ddd"/><polygon points="0.5,8 7.5,8 4,12.5" fill="#ddd"/></svg>
<div class="a" style="left:806px;top:952px;width:131px;height:20px;border:1px solid #262626;border-radius:4px 0px 0px 4px;background:linear-gradient(#aaa,#b8b8b8);"></div>
<div class="a" style="left:936px;top:952px;width:21px;height:20px;border:1px solid #262626;border-radius:0px 0px 0px 0px;background:linear-gradient(#aaaaaa,#8c8c8c);"></div>
<div class="a" style="left:956px;top:952px;width:20px;height:20px;border:1px solid #262626;border-radius:0px 4px 4px 0px;background:linear-gradient(#aaaaaa,#8c8c8c);"></div>
<svg class="a" style="left:809px;top:954px" width="18" height="16" viewBox="0 0 18 16"><g fill="none" stroke="#222" stroke-width="2.6"><path d="M4,11 V1.5 H7"/><circle cx="4" cy="12" r="2.3"/><line x1="7" y1="12" x2="14" y2="5"/><circle cx="15" cy="4" r="2"/></g><g fill="none" stroke="#f0d890" stroke-width="1.2"><path d="M4,11 V1.5 H7"/><circle cx="4" cy="12" r="2.3"/></g><g fill="none" stroke="#fff" stroke-width="1.2"><line x1="7" y1="12" x2="14" y2="5"/><circle cx="15" cy="4" r="2"/></g></svg>
<svg class="a" style="left:938px;top:954px" width="16" height="16" viewBox="0 0 16 16"><g fill="none" stroke="#222" stroke-width="2.6"><line x1="5" y1="11" x2="12" y2="4"/><circle cx="4" cy="12" r="2.3"/><circle cx="13" cy="3" r="2"/></g><g fill="none" stroke="#fff" stroke-width="1.2"><line x1="5" y1="11" x2="12" y2="4"/><circle cx="4" cy="12" r="2.3"/><circle cx="13" cy="3" r="2"/></g></svg>
<svg class="a" style="left:958px;top:954px" width="16" height="16" viewBox="0 0 16 16"><g fill="none" stroke="#222" stroke-width="2.6"><line x1="5" y1="11" x2="12" y2="4"/><circle cx="4" cy="12" r="2.3"/><circle cx="13" cy="3" r="2"/></g><g fill="none" stroke="#fff" stroke-width="1.2"><line x1="5" y1="11" x2="12" y2="4"/><circle cx="4" cy="12" r="2.3"/><circle cx="13" cy="3" r="2"/></g><g stroke="#e02020" stroke-width="1.6"><line x1="2" y1="2" x2="14" y2="14"/><line x1="14" y1="2" x2="2" y2="14"/></g></svg>
<!-- ============ IMAGE EDITOR ============ -->
<div class="a" style="left:1381px;top:0px;width:363px;height:143px;background:#393939"></div>
<svg class="a" style="left:1505px;top:14px" width="115" height="115" viewBox="1505 14 115 115">
<defs><clipPath id="uvc"><path d="M1510,25 H1540 V21 H1547 V19 H1615 V124 H1510 Z"/></clipPath></defs><g clip-path="url(#uvc)">
<path d="M1510,25 H1540 V21 H1547 V19 H1615 V124 H1510 Z" fill="#ff8c00"/>
<rect x="1512" y="20" width="28" height="5" fill="#4a4a4a"/>
<rect x="1511" y="25" width="5" height="1.6" fill="#000"/>
<rect x="1511" y="28" width="5" height="1.6" fill="#000"/>
<rect x="1511" y="31" width="6" height="1.6" fill="#000"/>
<ellipse cx="1514" cy="36.5" rx="2.8" ry="2.2" fill="#7a5a3a" stroke="#000" stroke-width="1"/>
<rect x="1511.5" y="41.5" width="5" height="7" rx="1.5" fill="#4a4a4a" stroke="#000" stroke-width="1"/>
<rect x="1512" y="49" width="1.5" height="5" fill="#000"/><rect x="1515" y="49" width="1.5" height="7" fill="#000"/>
<rect x="1511.5" y="57.5" width="4" height="7" rx="1.5" fill="#4a4a4a" stroke="#000" stroke-width="1"/>
<rect x="1512" y="65" width="1.5" height="7" fill="#000"/><rect x="1515" y="65" width="1.5" height="7" fill="#000"/>
<rect x="1512" y="73" width="1.5" height="5" fill="#000"/><rect x="1515" y="73" width="1.5" height="5" fill="#000"/>
<ellipse cx="1514" cy="84.5" rx="2.8" ry="2.2" fill="#7a5a3a" stroke="#000" stroke-width="1"/>
<rect x="1511.5" y="89.5" width="4" height="5" rx="1.5" fill="#7a5a3a" stroke="#000" stroke-width="1"/>
<rect x="1511" y="97" width="5" height="1.6" fill="#000"/>
<rect x="1511" y="100" width="5" height="1.6" fill="#000"/>
<rect x="1511" y="105" width="6" height="1.6" fill="#000"/>
<rect x="1511.5" y="113.5" width="5" height="6" rx="1.5" fill="#7a5a3a" stroke="#000" stroke-width="1"/>
<rect x="1512" y="121" width="1.5" height="7" fill="#000"/><rect x="1515" y="121" width="1.5" height="7" fill="#000"/>
<rect x="1518" y="25" width="4" height="1.6" fill="#000"/>
<rect x="1518" y="28" width="6" height="1.6" fill="#000"/>
<rect x="1518" y="31" width="5" height="1.6" fill="#000"/>
<rect x="1518.5" y="33.5" width="4" height="7" rx="1.5" fill="#7a5a3a" stroke="#000" stroke-width="1"/>
<rect x="1518.5" y="41.5" width="4" height="6" rx="1.5" fill="#7a5a3a" stroke="#000" stroke-width="1"/>
<ellipse cx="1521" cy="52.5" rx="2.8" ry="2.2" fill="#7a5a3a" stroke="#000" stroke-width="1"/>
<rect x="1518" y="57" width="6" height="1.6" fill="#000"/>
<rect x="1518.5" y="65.5" width="4" height="5" rx="1.5" fill="#7a5a3a" stroke="#000" stroke-width="1"/>
<rect x="1518.5" y="73.5" width="5" height="6" rx="1.5" fill="#7a5a3a" stroke="#000" stroke-width="1"/>
<rect x="1518" y="81" width="6" height="1.6" fill="#000"/>
<rect x="1518.5" y="89.5" width="4" height="6" rx="1.5" fill="#7a5a3a" stroke="#000" stroke-width="1"/>
<rect x="1518.5" y="97.5" width="5" height="5" rx="1.5" fill="#7a5a3a" stroke="#000" stroke-width="1"/>
<rect x="1518.5" y="105.5" width="4" height="5" rx="1.5" fill="#7a5a3a" stroke="#000" stroke-width="1"/>
<rect x="1518" y="113" width="4" height="1.6" fill="#000"/>
<rect x="1518" y="116" width="6" height="1.6" fill="#000"/>
<rect x="1518" y="121" width="6" height="1.6" fill="#000"/>
<rect x="1518" y="124" width="4" height="1.6" fill="#000"/>
<rect x="1526" y="33" width="1.5" height="7" fill="#000"/><rect x="1529" y="33" width="1.5" height="7" fill="#000"/>
<rect x="1525.5" y="41.5" width="5" height="5" rx="1.5" fill="#7a5a3a" stroke="#000" stroke-width="1"/>
<rect x="1525.5" y="49.5" width="5" height="5" rx="1.5" fill="#7a5a3a" stroke="#000" stroke-width="1"/>
<rect x="1525.5" y="57.5" width="4" height="5" rx="1.5" fill="#7a5a3a" stroke="#000" stroke-width="1"/>
<rect x="1525.5" y="65.5" width="5" height="5" rx="1.5" fill="#4a4a4a" stroke="#000" stroke-width="1"/>
<rect x="1525.5" y="73.5" width="5" height="6" rx="1.5" fill="#7a5a3a" stroke="#000" stroke-width="1"/>
<rect x="1525.5" y="81.5" width="4" height="7" rx="1.5" fill="#4a4a4a" stroke="#000" stroke-width="1"/>
<rect x="1525.5" y="89.5" width="5" height="6" rx="1.5" fill="#4a4a4a" stroke="#000" stroke-width="1"/>
<rect x="1525" y="97" width="5" height="1.6" fill="#000"/>
<rect x="1525" y="100" width="6" height="1.6" fill="#000"/>
<rect x="1525" y="103" width="4" height="1.6" fill="#000"/>
<ellipse cx="1528" cy="108.5" rx="2.8" ry="2.2" fill="#7a5a3a" stroke="#000" stroke-width="1"/>
<rect x="1525.5" y="113.5" width="4" height="6" rx="1.5" fill="#7a5a3a" stroke="#000" stroke-width="1"/>
<ellipse cx="1528" cy="124.5" rx="2.8" ry="2.2" fill="#7a5a3a" stroke="#000" stroke-width="1"/>
<rect x="1532.5" y="25.5" width="4" height="5" rx="1.5" fill="#4a4a4a" stroke="#000" stroke-width="1"/>
<rect x="1533" y="33" width="1.5" height="5" fill="#000"/><rect x="1536" y="33" width="1.5" height="7" fill="#000"/>
<ellipse cx="1535" cy="44.5" rx="2.8" ry="2.2" fill="#7a5a3a" stroke="#000" stroke-width="1"/>
<rect x="1532" y="49" width="4" height="1.6" fill="#000"/>
<rect x="1532" y="52" width="4" height="1.6" fill="#000"/>
<rect x="1532.5" y="57.5" width="5" height="5" rx="1.5" fill="#4a4a4a" stroke="#000" stroke-width="1"/>
<rect x="1533" y="65" width="1.5" height="7" fill="#000"/><rect x="1536" y="65" width="1.5" height="7" fill="#000"/>
<ellipse cx="1535" cy="76.5" rx="2.8" ry="2.2" fill="#7a5a3a" stroke="#000" stroke-width="1"/>
<rect x="1532" y="81" width="6" height="1.6" fill="#000"/>
<rect x="1532" y="84" width="4" height="1.6" fill="#000"/>
<ellipse cx="1535" cy="92.5" rx="2.8" ry="2.2" fill="#7a5a3a" stroke="#000" stroke-width="1"/>
<rect x="1532.5" y="105.5" width="5" height="7" rx="1.5" fill="#4a4a4a" stroke="#000" stroke-width="1"/>
<ellipse cx="1535" cy="116.5" rx="2.8" ry="2.2" fill="#7a5a3a" stroke="#000" stroke-width="1"/>
<rect x="1532" y="121" width="4" height="1.6" fill="#000"/>
<rect x="1532" y="124" width="4" height="1.6" fill="#000"/>
<rect x="1540" y="25" width="1.5" height="5" fill="#000"/><rect x="1543" y="25" width="1.5" height="7" fill="#000"/>
<rect x="1539" y="33" width="4" height="1.6" fill="#000"/>
<rect x="1539.5" y="41.5" width="5" height="6" rx="1.5" fill="#4a4a4a" stroke="#000" stroke-width="1"/>
<rect x="1539" y="49" width="4" height="1.6" fill="#000"/>
<rect x="1539.5" y="57.5" width="5" height="6" rx="1.5" fill="#4a4a4a" stroke="#000" stroke-width="1"/>
<rect x="1540" y="65" width="1.5" height="5" fill="#000"/><rect x="1543" y="65" width="1.5" height="5" fill="#000"/>
<ellipse cx="1542" cy="76.5" rx="2.8" ry="2.2" fill="#7a5a3a" stroke="#000" stroke-width="1"/>
<rect x="1539" y="81" width="6" height="1.6" fill="#000"/>
<rect x="1539" y="84" width="5" height="1.6" fill="#000"/>
<rect x="1539.5" y="97.5" width="4" height="6" rx="1.5" fill="#7a5a3a" stroke="#000" stroke-width="1"/>
<rect x="1540" y="105" width="1.5" height="7" fill="#000"/><rect x="1543" y="105" width="1.5" height="5" fill="#000"/>
<rect x="1539.5" y="121.5" width="5" height="7" rx="1.5" fill="#7a5a3a" stroke="#000" stroke-width="1"/>
<ellipse cx="1549" cy="28.5" rx="2.8" ry="2.2" fill="#7a5a3a" stroke="#000" stroke-width="1"/>
<rect x="1547" y="33" width="1.5" height="5" fill="#000"/><rect x="1550" y="33" width="1.5" height="7" fill="#000"/>
<rect x="1546.5" y="41.5" width="5" height="5" rx="1.5" fill="#7a5a3a" stroke="#000" stroke-width="1"/>
<rect x="1546.5" y="57.5" width="5" height="7" rx="1.5" fill="#7a5a3a" stroke="#000" stroke-width="1"/>
<rect x="1547" y="65" width="1.5" height="7" fill="#000"/><rect x="1550" y="65" width="1.5" height="7" fill="#000"/>
<rect x="1546" y="73" width="4" height="1.6" fill="#000"/>
<rect x="1546" y="76" width="4" height="1.6" fill="#000"/>
<rect x="1546" y="79" width="4" height="1.6" fill="#000"/>
<rect x="1547" y="81" width="1.5" height="7" fill="#000"/><rect x="1550" y="81" width="1.5" height="7" fill="#000"/>
<rect x="1547" y="89" width="1.5" height="7" fill="#000"/><rect x="1550" y="89" width="1.5" height="7" fill="#000"/>
<rect x="1546" y="97" width="4" height="1.6" fill="#000"/>
<rect x="1546" y="100" width="6" height="1.6" fill="#000"/>
<rect x="1546" y="103" width="6" height="1.6" fill="#000"/>
<rect x="1546.5" y="105.5" width="4" height="6" rx="1.5" fill="#7a5a3a" stroke="#000" stroke-width="1"/>
<rect x="1546.5" y="113.5" width="4" height="6" rx="1.5" fill="#4a4a4a" stroke="#000" stroke-width="1"/>
<rect x="1547" y="121" width="1.5" height="7" fill="#000"/><rect x="1550" y="121" width="1.5" height="7" fill="#000"/>
<ellipse cx="1556" cy="28.5" rx="2.8" ry="2.2" fill="#7a5a3a" stroke="#000" stroke-width="1"/>
<rect x="1553.5" y="33.5" width="4" height="7" rx="1.5" fill="#4a4a4a" stroke="#000" stroke-width="1"/>
<rect x="1553.5" y="41.5" width="4" height="6" rx="1.5" fill="#4a4a4a" stroke="#000" stroke-width="1"/>
<rect x="1553" y="57" width="5" height="1.6" fill="#000"/>
<rect x="1553" y="65" width="4" height="1.6" fill="#000"/>
<rect x="1553" y="68" width="6" height="1.6" fill="#000"/>
<rect x="1553" y="73" width="4" height="1.6" fill="#000"/>
<rect x="1553" y="81" width="5" height="1.6" fill="#000"/>
<rect x="1553" y="84" width="4" height="1.6" fill="#000"/>
<rect x="1553" y="87" width="4" height="1.6" fill="#000"/>
<rect x="1553.5" y="89.5" width="5" height="5" rx="1.5" fill="#4a4a4a" stroke="#000" stroke-width="1"/>
<rect x="1553.5" y="97.5" width="5" height="5" rx="1.5" fill="#7a5a3a" stroke="#000" stroke-width="1"/>
<rect x="1553" y="105" width="4" height="1.6" fill="#000"/>
<rect x="1553" y="108" width="5" height="1.6" fill="#000"/>
<rect x="1553" y="113" width="5" height="1.6" fill="#000"/>
<rect x="1553" y="116" width="6" height="1.6" fill="#000"/>
<rect x="1553" y="119" width="5" height="1.6" fill="#000"/>
<rect x="1554" y="121" width="1.5" height="7" fill="#000"/><rect x="1557" y="121" width="1.5" height="7" fill="#000"/>
<rect x="1560.5" y="25.5" width="4" height="6" rx="1.5" fill="#4a4a4a" stroke="#000" stroke-width="1"/>
<rect x="1560.5" y="33.5" width="5" height="7" rx="1.5" fill="#7a5a3a" stroke="#000" stroke-width="1"/>
<rect x="1560.5" y="41.5" width="4" height="7" rx="1.5" fill="#7a5a3a" stroke="#000" stroke-width="1"/>
<rect x="1560" y="49" width="4" height="1.6" fill="#000"/>
<rect x="1561" y="57" width="1.5" height="7" fill="#000"/><rect x="1564" y="57" width="1.5" height="5" fill="#000"/>
<rect x="1561" y="65" width="1.5" height="5" fill="#000"/><rect x="1564" y="65" width="1.5" height="5" fill="#000"/>
<rect x="1560" y="73" width="6" height="1.6" fill="#000"/>
<rect x="1560" y="76" width="6" height="1.6" fill="#000"/>
<rect x="1560" y="79" width="6" height="1.6" fill="#000"/>
<ellipse cx="1563" cy="84.5" rx="2.8" ry="2.2" fill="#7a5a3a" stroke="#000" stroke-width="1"/>
<rect x="1561" y="97" width="1.5" height="5" fill="#000"/><rect x="1564" y="97" width="1.5" height="7" fill="#000"/>
<rect x="1560.5" y="105.5" width="4" height="6" rx="1.5" fill="#4a4a4a" stroke="#000" stroke-width="1"/>
<rect x="1561" y="113" width="1.5" height="5" fill="#000"/><rect x="1564" y="113" width="1.5" height="5" fill="#000"/>
<rect x="1560.5" y="121.5" width="5" height="7" rx="1.5" fill="#4a4a4a" stroke="#000" stroke-width="1"/>
<rect x="1567" y="33" width="5" height="1.6" fill="#000"/>
<ellipse cx="1570" cy="44.5" rx="2.8" ry="2.2" fill="#7a5a3a" stroke="#000" stroke-width="1"/>
<rect x="1568" y="49" width="1.5" height="5" fill="#000"/><rect x="1571" y="49" width="1.5" height="5" fill="#000"/>
<rect x="1567" y="57" width="5" height="1.6" fill="#000"/>
<rect x="1567" y="60" width="4" height="1.6" fill="#000"/>
<rect x="1567" y="63" width="5" height="1.6" fill="#000"/>
<rect x="1567" y="65" width="4" height="1.6" fill="#000"/>
<rect x="1567" y="68" width="5" height="1.6" fill="#000"/>
<rect x="1567" y="71" width="6" height="1.6" fill="#000"/>
<rect x="1567" y="73" width="5" height="1.6" fill="#000"/>
<rect x="1567" y="76" width="5" height="1.6" fill="#000"/>
<rect x="1567" y="79" width="5" height="1.6" fill="#000"/>
<rect x="1568" y="81" width="1.5" height="5" fill="#000"/><rect x="1571" y="81" width="1.5" height="5" fill="#000"/>
<rect x="1568" y="89" width="1.5" height="5" fill="#000"/><rect x="1571" y="89" width="1.5" height="5" fill="#000"/>
<rect x="1567.5" y="97.5" width="5" height="5" rx="1.5" fill="#7a5a3a" stroke="#000" stroke-width="1"/>
<rect x="1567" y="105" width="5" height="1.6" fill="#000"/>
<rect x="1567" y="108" width="6" height="1.6" fill="#000"/>
<ellipse cx="1570" cy="116.5" rx="2.8" ry="2.2" fill="#7a5a3a" stroke="#000" stroke-width="1"/>
<rect x="1567.5" y="121.5" width="4" height="5" rx="1.5" fill="#7a5a3a" stroke="#000" stroke-width="1"/>
<rect x="1574.5" y="25.5" width="5" height="6" rx="1.5" fill="#7a5a3a" stroke="#000" stroke-width="1"/>
<ellipse cx="1577" cy="36.5" rx="2.8" ry="2.2" fill="#7a5a3a" stroke="#000" stroke-width="1"/>
<rect x="1574.5" y="41.5" width="4" height="6" rx="1.5" fill="#7a5a3a" stroke="#000" stroke-width="1"/>
<rect x="1574.5" y="49.5" width="5" height="7" rx="1.5" fill="#7a5a3a" stroke="#000" stroke-width="1"/>
<rect x="1574" y="57" width="6" height="1.6" fill="#000"/>
<rect x="1574" y="60" width="6" height="1.6" fill="#000"/>
<rect x="1574" y="63" width="6" height="1.6" fill="#000"/>
<rect x="1575" y="65" width="1.5" height="7" fill="#000"/><rect x="1578" y="65" width="1.5" height="5" fill="#000"/>
<rect x="1575" y="73" width="1.5" height="7" fill="#000"/><rect x="1578" y="73" width="1.5" height="7" fill="#000"/>
<ellipse cx="1577" cy="84.5" rx="2.8" ry="2.2" fill="#7a5a3a" stroke="#000" stroke-width="1"/>
<rect x="1574" y="89" width="6" height="1.6" fill="#000"/>
<rect x="1574" y="97" width="5" height="1.6" fill="#000"/>
<rect x="1574" y="100" width="5" height="1.6" fill="#000"/>
<rect x="1574" y="103" width="6" height="1.6" fill="#000"/>
<rect x="1574" y="105" width="4" height="1.6" fill="#000"/>
<rect x="1574" y="108" width="5" height="1.6" fill="#000"/>
<rect x="1574" y="111" width="4" height="1.6" fill="#000"/>
<rect x="1574" y="121" width="5" height="1.6" fill="#000"/>
<rect x="1574" y="124" width="4" height="1.6" fill="#000"/>
<rect x="1574" y="127" width="5" height="1.6" fill="#000"/>
<rect x="1581" y="25" width="4" height="1.6" fill="#000"/>
<rect x="1581" y="28" width="6" height="1.6" fill="#000"/>
<rect x="1581" y="31" width="5" height="1.6" fill="#000"/>
<rect x="1581.5" y="33.5" width="4" height="7" rx="1.5" fill="#7a5a3a" stroke="#000" stroke-width="1"/>
<rect x="1581" y="41" width="4" height="1.6" fill="#000"/>
<rect x="1581" y="44" width="5" height="1.6" fill="#000"/>
<rect x="1581" y="47" width="4" height="1.6" fill="#000"/>
<rect x="1582" y="49" width="1.5" height="5" fill="#000"/><rect x="1585" y="49" width="1.5" height="7" fill="#000"/>
<rect x="1581" y="57" width="5" height="1.6" fill="#000"/>
<rect x="1581" y="60" width="4" height="1.6" fill="#000"/>
<rect x="1581" y="65" width="5" height="1.6" fill="#000"/>
<rect x="1581" y="73" width="6" height="1.6" fill="#000"/>
<rect x="1581" y="76" width="5" height="1.6" fill="#000"/>
<rect x="1581.5" y="81.5" width="5" height="7" rx="1.5" fill="#7a5a3a" stroke="#000" stroke-width="1"/>
<ellipse cx="1584" cy="92.5" rx="2.8" ry="2.2" fill="#7a5a3a" stroke="#000" stroke-width="1"/>
<rect x="1581.5" y="97.5" width="4" height="5" rx="1.5" fill="#7a5a3a" stroke="#000" stroke-width="1"/>
<rect x="1581.5" y="105.5" width="4" height="7" rx="1.5" fill="#7a5a3a" stroke="#000" stroke-width="1"/>
<rect x="1581.5" y="113.5" width="5" height="5" rx="1.5" fill="#4a4a4a" stroke="#000" stroke-width="1"/>
<rect x="1581" y="121" width="6" height="1.6" fill="#000"/>
<rect x="1581" y="124" width="6" height="1.6" fill="#000"/>
<rect x="1588.5" y="25.5" width="5" height="7" rx="1.5" fill="#7a5a3a" stroke="#000" stroke-width="1"/>
<rect x="1589" y="33" width="1.5" height="7" fill="#000"/><rect x="1592" y="33" width="1.5" height="5" fill="#000"/>
<rect x="1588.5" y="41.5" width="5" height="7" rx="1.5" fill="#4a4a4a" stroke="#000" stroke-width="1"/>
<rect x="1588.5" y="49.5" width="4" height="7" rx="1.5" fill="#4a4a4a" stroke="#000" stroke-width="1"/>
<rect x="1589" y="57" width="1.5" height="5" fill="#000"/><rect x="1592" y="57" width="1.5" height="5" fill="#000"/>
<rect x="1588.5" y="65.5" width="5" height="5" rx="1.5" fill="#7a5a3a" stroke="#000" stroke-width="1"/>
<rect x="1588" y="73" width="4" height="1.6" fill="#000"/>
<rect x="1589" y="81" width="1.5" height="5" fill="#000"/><rect x="1592" y="81" width="1.5" height="5" fill="#000"/>
<rect x="1588.5" y="89.5" width="4" height="5" rx="1.5" fill="#4a4a4a" stroke="#000" stroke-width="1"/>
<rect x="1588.5" y="97.5" width="5" height="5" rx="1.5" fill="#7a5a3a" stroke="#000" stroke-width="1"/>
<ellipse cx="1591" cy="108.5" rx="2.8" ry="2.2" fill="#7a5a3a" stroke="#000" stroke-width="1"/>
<rect x="1588" y="113" width="4" height="1.6" fill="#000"/>
<rect x="1588" y="116" width="4" height="1.6" fill="#000"/>
<rect x="1588" y="119" width="5" height="1.6" fill="#000"/>
<rect x="1589" y="121" width="1.5" height="5" fill="#000"/><rect x="1592" y="121" width="1.5" height="5" fill="#000"/>
<rect x="1595.5" y="25.5" width="5" height="6" rx="1.5" fill="#7a5a3a" stroke="#000" stroke-width="1"/>
<rect x="1596" y="33" width="1.5" height="7" fill="#000"/><rect x="1599" y="33" width="1.5" height="5" fill="#000"/>
<ellipse cx="1598" cy="44.5" rx="2.8" ry="2.2" fill="#7a5a3a" stroke="#000" stroke-width="1"/>
<rect x="1595" y="49" width="4" height="1.6" fill="#000"/>
<rect x="1596" y="57" width="1.5" height="7" fill="#000"/><rect x="1599" y="57" width="1.5" height="5" fill="#000"/>
<rect x="1595.5" y="65.5" width="4" height="5" rx="1.5" fill="#7a5a3a" stroke="#000" stroke-width="1"/>
<ellipse cx="1598" cy="76.5" rx="2.8" ry="2.2" fill="#7a5a3a" stroke="#000" stroke-width="1"/>
<ellipse cx="1598" cy="92.5" rx="2.8" ry="2.2" fill="#7a5a3a" stroke="#000" stroke-width="1"/>
<rect x="1595.5" y="97.5" width="4" height="5" rx="1.5" fill="#4a4a4a" stroke="#000" stroke-width="1"/>
<rect x="1595" y="105" width="5" height="1.6" fill="#000"/>
<rect x="1595" y="113" width="6" height="1.6" fill="#000"/>
<rect x="1595" y="116" width="5" height="1.6" fill="#000"/>
<rect x="1595" y="121" width="5" height="1.6" fill="#000"/>
<rect x="1595" y="124" width="4" height="1.6" fill="#000"/>
<rect x="1595" y="127" width="6" height="1.6" fill="#000"/>
<rect x="1603" y="25" width="1.5" height="5" fill="#000"/><rect x="1606" y="25" width="1.5" height="5" fill="#000"/>
<rect x="1602" y="33" width="6" height="1.6" fill="#000"/>
<rect x="1602" y="36" width="5" height="1.6" fill="#000"/>
<rect x="1602" y="41" width="6" height="1.6" fill="#000"/>
<rect x="1602.5" y="49.5" width="4" height="6" rx="1.5" fill="#7a5a3a" stroke="#000" stroke-width="1"/>
<ellipse cx="1605" cy="60.5" rx="2.8" ry="2.2" fill="#7a5a3a" stroke="#000" stroke-width="1"/>
<rect x="1603" y="65" width="1.5" height="7" fill="#000"/><rect x="1606" y="65" width="1.5" height="5" fill="#000"/>
<rect x="1602" y="73" width="5" height="1.6" fill="#000"/>
<rect x="1602" y="76" width="5" height="1.6" fill="#000"/>
<ellipse cx="1605" cy="84.5" rx="2.8" ry="2.2" fill="#7a5a3a" stroke="#000" stroke-width="1"/>
<rect x="1603" y="89" width="1.5" height="5" fill="#000"/><rect x="1606" y="89" width="1.5" height="7" fill="#000"/>
<rect x="1602.5" y="97.5" width="5" height="7" rx="1.5" fill="#4a4a4a" stroke="#000" stroke-width="1"/>
<rect x="1602.5" y="105.5" width="5" height="5" rx="1.5" fill="#7a5a3a" stroke="#000" stroke-width="1"/>
<rect x="1602.5" y="113.5" width="4" height="5" rx="1.5" fill="#7a5a3a" stroke="#000" stroke-width="1"/>
<rect x="1602.5" y="121.5" width="4" height="5" rx="1.5" fill="#7a5a3a" stroke="#000" stroke-width="1"/>
<ellipse cx="1612" cy="36.5" rx="2.8" ry="2.2" fill="#7a5a3a" stroke="#000" stroke-width="1"/>
<rect x="1609.5" y="41.5" width="5" height="7" rx="1.5" fill="#7a5a3a" stroke="#000" stroke-width="1"/>
<rect x="1609.5" y="49.5" width="5" height="7" rx="1.5" fill="#7a5a3a" stroke="#000" stroke-width="1"/>
<rect x="1609" y="57" width="6" height="1.6" fill="#000"/>
<rect x="1609" y="60" width="5" height="1.6" fill="#000"/>
<rect x="1610" y="65" width="1.5" height="5" fill="#000"/><rect x="1613" y="65" width="1.5" height="7" fill="#000"/>
<rect x="1609.5" y="81.5" width="4" height="7" rx="1.5" fill="#7a5a3a" stroke="#000" stroke-width="1"/>
<rect x="1609.5" y="89.5" width="5" height="7" rx="1.5" fill="#7a5a3a" stroke="#000" stroke-width="1"/>
<rect x="1610" y="97" width="1.5" height="7" fill="#000"/><rect x="1613" y="97" width="1.5" height="5" fill="#000"/>
<rect x="1609.5" y="105.5" width="5" height="6" rx="1.5" fill="#7a5a3a" stroke="#000" stroke-width="1"/>
<rect x="1609" y="113" width="5" height="1.6" fill="#000"/>
<rect x="1609" y="116" width="6" height="1.6" fill="#000"/>
<rect x="1609" y="119" width="6" height="1.6" fill="#000"/>
<ellipse cx="1612" cy="124.5" rx="2.8" ry="2.2" fill="#7a5a3a" stroke="#000" stroke-width="1"/>
<g fill="#4a4a4a"><ellipse cx="1528" cy="93" rx="10" ry="3"/><rect x="1520" y="108" width="12" height="4"/><rect x="1560" y="105" width="6" height="10"/></g>
</g></svg>
<svg class="a" style="left:1488px;top:96px" width="50" height="46" viewBox="1488 96 50 46"><g stroke="#fff" stroke-width="1" stroke-dasharray="1.2 1.2"><line x1="1491" y1="122" x2="1537" y2="122"/><line x1="1511.3" y1="97" x2="1511.3" y2="142"/></g><polygon points="1511.3,109 1524.3,122 1511.3,135 1498.3,122" fill="none" stroke="#fff" stroke-width="1"/><polygon points="1511.3,109 1524.3,122 1511.3,135 1498.3,122" fill="none" stroke="#e01010" stroke-width="1" stroke-dasharray="4 4"/></svg>
<div class="a" style="left:1381px;top:0px;width:363px;height:1px;background:#4a4a4a"></div>
<div class="a" style="left:1381px;top:22px;width:13px;height:14px;background:#272727;border-radius:0 4px 4px 0"></div>
<svg class="a" style="left:1383px;top:25px" width="9" height="9" viewBox="0 0 9 9"><path d="M4.5,1 V8 M1,4.5 H8" stroke="#7a7a7a" stroke-width="2"/></svg>
<div class="a" style="left:1731px;top:22px;width:13px;height:14px;background:#272727;border-radius:4px 0 0 4px"></div>
<svg class="a" style="left:1733px;top:25px" width="9" height="9" viewBox="0 0 9 9"><path d="M4.5,1 V8 M1,4.5 H8" stroke="#7a7a7a" stroke-width="2"/></svg>
<svg class="a" style="left:1732px;top:0" width="12" height="12" viewBox="0 0 12 12"><g stroke="#ddd" stroke-width="1" opacity="0.7"><line x1="2" y1="0" x2="12" y2="10"/><line x1="6" y1="0" x2="12" y2="6"/></g></svg>
<div class="a" style="left:1381px;top:143px;width:363px;height:25px;background:#727272"></div>
<div class="a" style="left:1381px;top:143px;width:363px;height:1px;background:#8a8a8a"></div>
<div class="a" style="left:1381px;top:168px;width:363px;height:1px;background:#000"></div>
<div class="a" style="left:1389px;top:147px;width:29px;height:20px;border:1px solid #262626;border-radius:4px 4px 4px 4px;background:linear-gradient(#555555,#393939);"></div>
<svg class="a" style="left:1392px;top:149px" width="15" height="15" viewBox="0 0 15 15"><path d="M1,1 H10 L14,5 V14 H1 Z" fill="#f4f4f4" stroke="#222" stroke-width="1"/><rect x="2.5" y="4" width="10" height="4" fill="#e8a8a0"/><rect x="2.5" y="9" width="10" height="3" fill="#a8b8d8"/><line x1="3" y1="12.5" x2="6" y2="12.5" stroke="#e02020"/></svg>
<svg class="a" style="left:1409px;top:151px" width="8" height="13" viewBox="0 0 8 13"><polygon points="4,0.5 7.5,5 0.5,5" fill="#ddd"/><polygon points="0.5,8 7.5,8 4,12.5" fill="#ddd"/></svg>
<div class="t" style="left:1431px;top:152px;color:#000;font-size:11px;">View</div>
<div class="t" style="left:1476px;top:152px;color:#000;font-size:11px;">Select</div>
<div class="t" style="left:1527px;top:152px;color:#000;font-size:11px;">Image</div>
<div class="t" style="left:1578px;top:152px;color:#000;font-size:11px;">UVs</div>
<div class="a" style="left:1611px;top:147px;width:32px;height:20px;border:1px solid #262626;border-radius:4px 0px 0px 4px;background:linear-gradient(#575757,#363636);"></div>
<div class="a" style="left:1643px;top:147px;width:60px;height:20px;border:1px solid #262626;border-radius:0px 0px 0px 0px;background:linear-gradient(#aaaaaa,#8c8c8c);"></div>
<div class="a" style="left:1702px;top:147px;width:68px;height:20px;border:1px solid #262626;border-radius:0px 4px 4px 0px;background:linear-gradient(#aaaaaa,#8c8c8c);"></div>
<svg class="a" style="left:1615px;top:149px" width="15" height="15" viewBox="0 0 15 15"><path d="M1,1 H10 L14,5 V14 H1 Z" fill="#f4f4f4" stroke="#222" stroke-width="1"/><rect x="2.5" y="4" width="10" height="4" fill="#e8a8a0"/><rect x="2.5" y="9" width="10" height="3" fill="#a8b8d8"/><line x1="3" y1="12.5" x2="6" y2="12.5" stroke="#e02020"/></svg>
<svg class="a" style="left:1632px;top:151px" width="8" height="13" viewBox="0 0 8 13"><polygon points="4,0.5 7.5,5 0.5,5" fill="#ddd"/><polygon points="0.5,8 7.5,8 4,12.5" fill="#ddd"/></svg>
<svg class="a" style="left:1646px;top:150px" width="14" height="14" viewBox="0 0 14 14"><path d="M7,1 V13 M1,7 H13" stroke="#222" stroke-width="3.4"/><path d="M7,1.5 V12.5 M1.5,7 H12.5" stroke="#fff" stroke-width="1.6"/></svg>
<div class="t" style="left:1669px;top:152px;color:#000;font-size:11px;">New</div>
<svg class="a" style="left:1705px;top:149px" width="18" height="16" viewBox="0 0 18 16"><rect x="6" y="1" width="9" height="7" fill="#f2f2f2" stroke="#333" stroke-width="0.8"/><path d="M1,5 H6 L7.5,6.5 H17 V15 H1 Z" fill="#d8c890" stroke="#333" stroke-width="1"/></svg>
<div class="t" style="left:1727px;top:152px;color:#000;font-size:11px;">Open</div>
<!-- ============ PROPERTIES ============ -->
<div class="a" style="left:1381px;top:169px;width:363px;height:806px;background:#727272"></div>
<div class="a" style="left:1381px;top:169px;width:363px;height:1px;background:#8a8a8a"></div>
<div class="a" style="left:1381px;top:195px;width:363px;height:1px;background:#5e5e5e"></div>
<div class="a" style="left:1390px;top:173px;width:29px;height:20px;border:1px solid #262626;border-radius:4px 4px 4px 4px;background:linear-gradient(#555555,#393939);"></div>
<svg class="a" style="left:1393px;top:176px" width="16" height="14" viewBox="0 0 16 14"><rect x="1" y="1" width="13" height="5" rx="2" fill="#eee" stroke="#222" stroke-width="1"/><rect x="1" y="8" width="13" height="5" rx="2" fill="#eee" stroke="#222" stroke-width="1"/><rect x="2" y="2" width="6" height="3" fill="#333"/></svg>
<svg class="a" style="left:1410px;top:177px" width="8" height="13" viewBox="0 0 8 13"><polygon points="4,0.5 7.5,5 0.5,5" fill="#ddd"/><polygon points="0.5,8 7.5,8 4,12.5" fill="#ddd"/></svg>
<div class="a" style="left:1428px;top:173px;width:20px;height:20px;border:1px solid #262626;border-radius:4px 0px 0px 4px;background:linear-gradient(#6d96d6,#4a72b3);"></div>
<div class="a" style="left:1447px;top:173px;width:21px;height:20px;border:1px solid #262626;border-radius:0px 0px 0px 0px;background:linear-gradient(#575757,#363636);"></div>
<div class="a" style="left:1467px;top:173px;width:21px;height:20px;border:1px solid #262626;border-radius:0px 0px 0px 0px;background:linear-gradient(#575757,#363636);"></div>
<div class="a" style="left:1488px;top:173px;width:21px;height:20px;border:1px solid #262626;border-radius:0px 0px 0px 0px;background:linear-gradient(#575757,#363636);"></div>
<div class="a" style="left:1507px;top:173px;width:21px;height:20px;border:1px solid #262626;border-radius:0px 0px 0px 0px;background:linear-gradient(#575757,#363636);"></div>
<div class="a" style="left:1527px;top:173px;width:21px;height:20px;border:1px solid #262626;border-radius:0px 0px 0px 0px;background:linear-gradient(#575757,#363636);"></div>
<div class="a" style="left:1547px;top:173px;width:21px;height:20px;border:1px solid #262626;border-radius:0px 0px 0px 0px;background:linear-gradient(#575757,#363636);"></div>
<div class="a" style="left:1567px;top:173px;width:21px;height:20px;border:1px solid #262626;border-radius:0px 0px 0px 0px;background:linear-gradient(#575757,#363636);"></div>
<div class="a" style="left:1587px;top:173px;width:21px;height:20px;border:1px solid #262626;border-radius:0px 0px 0px 0px;background:linear-gradient(#575757,#363636);"></div>
<div class="a" style="left:1607px;top:173px;width:21px;height:20px;border:1px solid #262626;border-radius:0px 0px 0px 0px;background:linear-gradient(#575757,#363636);"></div>
<div class="a" style="left:1627px;top:173px;width:21px;height:20px;border:1px solid #262626;border-radius:0px 0px 0px 0px;background:linear-gradient(#575757,#363636);"></div>
<div class="a" style="left:1648px;top:173px;width:20px;height:20px;border:1px solid #262626;border-radius:0px 4px 4px 0px;background:linear-gradient(#575757,#363636);"></div>
<svg class="a" style="left:1430px;top:175px" width="16" height="16" viewBox="0 0 16 16"><rect x="1" y="4" width="14" height="10" rx="1" fill="#ddd" stroke="#222"/><rect x="3" y="2" width="4" height="3" fill="#ccc" stroke="#222" stroke-width="0.8"/><circle cx="9" cy="9" r="3.3" fill="#333" stroke="#fff" stroke-width="0.8"/><circle cx="9" cy="9" r="1.4" fill="#c03030"/></svg>
<svg class="a" style="left:1449px;top:175px" width="16" height="16" viewBox="0 0 16 16"><rect x="4" y="4" width="10" height="10" fill="#aaa" stroke="#333" stroke-width="0.8" transform="rotate(10 9 9)"/><rect x="2" y="2" width="10" height="10" fill="#ddd" stroke="#333" stroke-width="0.8"/><path d="M6,4 V9 A1.5,1.5 0 1 1 4.5,8" fill="none" stroke="#3a6ad0" stroke-width="1.5"/></svg>
<svg class="a" style="left:1469px;top:175px" width="16" height="16" viewBox="0 0 16 16"><circle cx="4" cy="3" r="1.5" fill="#f0c060"/><circle cx="5.5" cy="11" r="3.5" fill="#ddd" stroke="#333" stroke-width="0.8"/><rect x="9" y="2" width="5" height="10" rx="2" fill="#5a8ad0" stroke="#333" stroke-width="0.8"/></svg>
<svg class="a" style="left:1489px;top:175px" width="16" height="16" viewBox="0 0 16 16"><circle cx="8" cy="8" r="6.5" fill="#4a7ac0" stroke="#222" stroke-width="0.8"/><path d="M4,5 Q7,3 8,6 Q6,9 9,11 Q5,12 3,9 Z" fill="#6ab060"/><path d="M10,3 Q13,5 12,9 Q10,8 10,3Z" fill="#6ab060"/></svg>
<svg class="a" style="left:1509px;top:175px" width="16" height="16" viewBox="0 0 16 16"><polygon points="8,1.5 14,4.5 14,11.5 8,14.5 2,11.5 2,4.5" fill="#c89860" stroke="#333" stroke-width="0.8"/><polygon points="8,7.5 14,4.5 14,11.5 8,14.5" fill="#a87840"/><polygon points="2,4.5 8,1.5 14,4.5 8,7.5" fill="#e8c090"/></svg>
<svg class="a" style="left:1529px;top:175px" width="16" height="16" viewBox="0 0 16 16"><g fill="none" stroke="#222" stroke-width="3"><rect x="1.5" y="7" width="8" height="5" rx="2.5" transform="rotate(-40 5.5 9.5)"/><rect x="6.5" y="4" width="8" height="5" rx="2.5" transform="rotate(-40 10.5 6.5)"/></g><g fill="none" stroke="#ddd" stroke-width="1.3"><rect x="1.5" y="7" width="8" height="5" rx="2.5" transform="rotate(-40 5.5 9.5)"/><rect x="6.5" y="4" width="8" height="5" rx="2.5" transform="rotate(-40 10.5 6.5)"/></g></svg>
<svg class="a" style="left:1549px;top:175px" width="16" height="16" viewBox="0 0 16 16"><path d="M2,14 L9,7 A3.5,3.5 0 1 1 13,3 L11,5 L12,6 L14,4 A3.5,3.5 0 0 1 9,8" fill="#5a8ad0" stroke="#222" stroke-width="0.8"/></svg>
<svg class="a" style="left:1569px;top:175px" width="16" height="16" viewBox="0 0 16 16"><polygon points="2,3 14,3 8,14" fill="none" stroke="#222" stroke-width="1"/><g fill="#eee" stroke="#222" stroke-width="0.7"><circle cx="2" cy="3" r="1.5"/><circle cx="14" cy="3" r="1.5"/><circle cx="8" cy="14" r="1.5"/></g></svg>
<svg class="a" style="left:1589px;top:175px" width="16" height="16" viewBox="0 0 16 16"><circle cx="8" cy="8" r="6.5" fill="#888" stroke="#222" stroke-width="0.8"/><path d="M8,1.5 A6.5,6.5 0 0 0 8,14.5 Z" fill="#444"/><path d="M8,8 H14.5 A6.5,6.5 0 0 1 8,14.5 Z" fill="#c0a080"/></svg>
<svg class="a" style="left:1609px;top:175px" width="16" height="16" viewBox="0 0 16 16"><rect x="2" y="2" width="12" height="12" fill="#eee" stroke="#333" stroke-width="0.8"/><g fill="#b03030"><rect x="2" y="2" width="3" height="3"/><rect x="8" y="2" width="3" height="3"/><rect x="5" y="5" width="3" height="3"/><rect x="11" y="5" width="3" height="3"/><rect x="2" y="8" width="3" height="3"/><rect x="8" y="8" width="3" height="3"/><rect x="5" y="11" width="3" height="3"/><rect x="11" y="11" width="3" height="3"/></g></svg>
<svg class="a" style="left:1629px;top:175px" width="16" height="16" viewBox="0 0 16 16"><g stroke="#e8d090" stroke-width="1.2"><path d="M5,1 V9 M1,5 H9"/><path d="M11,3 V9 M8,6 H14"/><path d="M6,9 V15 M3,12 H9"/><path d="M12,10 V15 M9.5,12.5 H14.5"/></g></svg>
<svg class="a" style="left:1650px;top:175px" width="16" height="16" viewBox="0 0 16 16"><path d="M2,9 L6,13 L11,5" fill="none" stroke="#4a6ab0" stroke-width="2.2"/><circle cx="12" cy="4" r="3" fill="#ccc" stroke="#333" stroke-width="0.8"/></svg>
<svg class="a" style="left:1730px;top:170px" width="14" height="12" viewBox="0 0 14 12"><g stroke="#ddd" stroke-width="1" opacity="0.7"><line x1="2" y1="0" x2="14" y2="12"/><line x1="6" y1="0" x2="14" y2="8"/><line x1="10" y1="0" x2="14" y2="4"/></g></svg>
<svg class="a" style="left:1391px;top:206px" width="16" height="16" viewBox="0 0 16 16"><path d="M1.5,14.5 L7,9" stroke="#222" stroke-width="1.6"/><polygon points="5,7 9,3 11,1 15,5 13,7 9,11" fill="#eee" stroke="#222" stroke-width="1"/></svg>
<svg class="a" style="left:1413px;top:206px" width="16" height="16" viewBox="0 0 16 16"><circle cx="3.5" cy="3" r="1.6" fill="#f0c060"/><circle cx="5.5" cy="11" r="3.5" fill="#eee" stroke="#333" stroke-width="0.8"/><rect x="9" y="2" width="5" height="10" rx="2" fill="#5a8ad0" stroke="#333" stroke-width="0.8"/></svg>
<div class="t" style="left:1433px;top:208px;color:#000;font-size:11px;">Scene</div>
<div class="a" style="left:1386px;top:231px;width:353px;height:1px;background:#4e4e4e"></div><div class="a" style="left:1386px;top:232px;width:353px;height:1px;background:#8a8a8a"></div>
<svg class="a" style="left:1394px;top:239px" width="10" height="9" viewBox="0 0 10 9"><polygon points="0.5,0.5 9.5,0.5 5,8.5" fill="#111"/></svg>
<div class="t" style="left:1406px;top:238px;color:#000;font-size:12px;">Render</div>
<svg class="a" style="left:1723px;top:242px" width="12" height="6" viewBox="0 0 12 6"><g fill="#3a3a3a"><rect x="0" y="1" width="1" height="1"/><rect x="0" y="4" width="1" height="1"/><rect x="3" y="1" width="1" height="1"/><rect x="3" y="4" width="1" height="1"/><rect x="6" y="1" width="1" height="1"/><rect x="6" y="4" width="1" height="1"/><rect x="9" y="1" width="1" height="1"/><rect x="9" y="4" width="1" height="1"/></g><g fill="#9a9a9a"><rect x="0" y="0" width="1" height="1"/><rect x="0" y="3" width="1" height="1"/><rect x="3" y="0" width="1" height="1"/><rect x="3" y="3" width="1" height="1"/><rect x="6" y="0" width="1" height="1"/><rect x="6" y="3" width="1" height="1"/><rect x="9" y="0" width="1" height="1"/><rect x="9" y="3" width="1" height="1"/></g></svg>
<div class="a" style="left:1389px;top:264px;width:115px;height:20px;border:1px solid #262626;border-radius:4px 0px 0px 4px;background:linear-gradient(#aaaaaa,#8c8c8c);"></div>
<div class="a" style="left:1504px;top:264px;width:116px;height:20px;border:1px solid #262626;border-radius:0px 0px 0px 0px;background:linear-gradient(#aaaaaa,#8c8c8c);"></div>
<div class="a" style="left:1618px;top:264px;width:118px;height:20px;border:1px solid #262626;border-radius:0px 4px 4px 0px;background:linear-gradient(#aaaaaa,#8c8c8c);"></div>
<div class="t" style="left:1405px;top:269px;width:99px;text-align:center;color:#000;font-size:11px;">Render</div>
<div class="t" style="left:1520px;top:269px;width:98px;text-align:center;color:#000;font-size:11px;">Animation</div>
<div class="t" style="left:1635px;top:269px;width:101px;text-align:center;color:#000;font-size:11px;">Audio</div>
<svg class="a" style="left:1392px;top:266px" width="17" height="16" viewBox="0 0 17 16"><rect x="1" y="5" width="14" height="10" rx="1" fill="#ddd" stroke="#222" stroke-width="1"/><rect x="3" y="3" width="4" height="3" fill="#ccc" stroke="#222" stroke-width="0.8"/><circle cx="9" cy="10" r="3.5" fill="#333" stroke="#fff" stroke-width="0.8"/><circle cx="9" cy="10" r="1.5" fill="#c03030"/><circle cx="14" cy="3.5" r="3" fill="#f5b030"/><path d="M14,1.5 V5.5 M12,3.5 H16" stroke="#fff" stroke-width="1"/></svg>
<svg class="a" style="left:1507px;top:266px" width="17" height="16" viewBox="0 0 17 16"><rect x="2" y="7" width="13" height="8" fill="#333" stroke="#111" stroke-width="0.8"/><polygon points="2,6 14,2 15,5 3,9" fill="#eee" stroke="#111" stroke-width="0.8"/><g stroke="#111" stroke-width="1.2"><line x1="5" y1="5" x2="6" y2="8"/><line x1="9" y1="3.7" x2="10" y2="6.7"/></g><rect x="1" y="6" width="2" height="5" fill="#6aa0e0"/></svg>
<svg class="a" style="left:1622px;top:266px" width="17" height="16" viewBox="0 0 17 16"><polygon points="2,5 5,5 9,2 9,14 5,11 2,11" fill="#eee" stroke="#222" stroke-width="0.9"/><path d="M11,5 Q13,8 11,11 M13,3 Q16,8 13,13" fill="none" stroke="#5a7ad0" stroke-width="1.3"/></svg>
<div class="t" style="left:1396px;top:294px;color:#000;font-size:11px;">Display:</div>
<div class="a" style="left:1508px;top:289px;width:208px;height:20px;border:1px solid #262626;border-radius:4px 0px 0px 4px;background:linear-gradient(#555555,#393939);"></div>
<div class="a" style="left:1716px;top:289px;width:20px;height:20px;border:1px solid #262626;border-radius:0px 4px 4px 0px;background:linear-gradient(#aaaaaa,#8c8c8c);"></div>
<div class="t" style="left:1516px;top:294px;color:#fff;font-size:11px;">Image Editor</div>
<svg class="a" style="left:1704px;top:293px" width="8" height="13" viewBox="0 0 8 13"><polygon points="4,0.5 7.5,5 0.5,5" fill="#ddd"/><polygon points="0.5,8 7.5,8 4,12.5" fill="#ddd"/></svg>
<svg class="a" style="left:1718px;top:291px" width="16" height="16" viewBox="0 0 16 16"><path d="M3,7 V4 A3,3 0 0 1 9,4" fill="none" stroke="#222" stroke-width="2.2"/><path d="M3,7 V4 A3,3 0 0 1 9,4" fill="none" stroke="#eee" stroke-width="1"/><rect x="4" y="7" width="10" height="7" fill="#eee" stroke="#222" stroke-width="1"/><rect x="8.5" y="9.5" width="1.2" height="2.5" fill="#222"/></svg>
<div class="a" style="left:1386px;top:316px;width:353px;height:1px;background:#4e4e4e"></div><div class="a" style="left:1386px;top:317px;width:353px;height:1px;background:#8a8a8a"></div>
<svg class="a" style="left:1394px;top:324px" width="10" height="9" viewBox="0 0 10 9"><polygon points="0.5,0.5 9.5,0.5 5,8.5" fill="#111"/></svg>
<div class="t" style="left:1406px;top:323px;color:#000;font-size:12px;">Dimensions</div>
<svg class="a" style="left:1723px;top:327px" width="12" height="6" viewBox="0 0 12 6"><g fill="#3a3a3a"><rect x="0" y="1" width="1" height="1"/><rect x="0" y="4" width="1" height="1"/><rect x="3" y="1" width="1" height="1"/><rect x="3" y="4" width="1" height="1"/><rect x="6" y="1" width="1" height="1"/><rect x="6" y="4" width="1" height="1"/><rect x="9" y="1" width="1" height="1"/><rect x="9" y="4" width="1" height="1"/></g><g fill="#9a9a9a"><rect x="0" y="0" width="1" height="1"/><rect x="0" y="3" width="1" height="1"/><rect x="3" y="0" width="1" height="1"/><rect x="3" y="3" width="1" height="1"/><rect x="6" y="0" width="1" height="1"/><rect x="6" y="3" width="1" height="1"/><rect x="9" y="0" width="1" height="1"/><rect x="9" y="3" width="1" height="1"/></g></svg>
<div class="a" style="left:1389px;top:349px;width:308px;height:20px;border:1px solid #262626;border-radius:4px 0px 0px 4px;background:linear-gradient(#555555,#393939);"></div>
<div class="a" style="left:1696px;top:349px;width:20px;height:20px;border:1px solid #262626;border-radius:0px 0px 0px 0px;background:linear-gradient(#575757,#363636);"></div>
<div class="a" style="left:1715px;top:349px;width:21px;height:20px;border:1px solid #262626;border-radius:0px 4px 4px 0px;background:linear-gradient(#575757,#363636);"></div>
<div class="t" style="left:1396px;top:354px;color:#fff;font-size:11px;">Render Presets</div>
<svg class="a" style="left:1685px;top:353px" width="8" height="13" viewBox="0 0 8 13"><polygon points="4,0.5 7.5,5 0.5,5" fill="#ddd"/><polygon points="0.5,8 7.5,8 4,12.5" fill="#ddd"/></svg>
<svg class="a" style="left:1698px;top:352px" width="14" height="14" viewBox="0 0 14 14"><path d="M7,1 V13 M1,7 H13" stroke="#222" stroke-width="3.2"/><path d="M7,1.5 V12.5 M1.5,7 H12.5" stroke="#fff" stroke-width="1.5"/></svg>
<svg class="a" style="left:1718px;top:352px" width="14" height="14" viewBox="0 0 14 14"><path d="M1,7 H13" stroke="#222" stroke-width="3.2"/><path d="M1.5,7 H12.5" stroke="#fff" stroke-width="1.5"/></svg>
<div class="t" style="left:1396px;top:379px;color:#000;font-size:11px;">Resolution:</div>
<div class="t" style="left:1574px;top:379px;color:#000;font-size:11px;">Frame Range:</div>
<div class="a" style="left:1390px;top:394px;width:167px;height:20px;border:1px solid #262626;border-radius:9px 9px 0px 0px;background:linear-gradient(#a2a2a2,#b6b6b6)"></div>
<svg class="a" style="left:1397px;top:400px" width="5" height="8" viewBox="0 0 5 8"><polygon points="4.5,0.5 4.5,7.5 0.5,4" fill="#666"/></svg>
<svg class="a" style="left:1546px;top:400px" width="5" height="8" viewBox="0 0 5 8"><polygon points="0.5,0.5 0.5,7.5 4.5,4" fill="#666"/></svg>
<div class="t" style="left:1405px;top:399px;color:#000;font-size:11px;">X:</div>
<div class="t" style="left:1241px;top:399px;width:300px;text-align:right;color:#000;font-size:11px;">1920 px</div>
<div class="a" style="left:1390px;top:413px;width:167px;height:21px;border:1px solid #262626;border-radius:0px 0px 0px 0px;background:linear-gradient(#a2a2a2,#b6b6b6)"></div>
<svg class="a" style="left:1397px;top:419px" width="5" height="8" viewBox="0 0 5 8"><polygon points="4.5,0.5 4.5,7.5 0.5,4" fill="#666"/></svg>
<svg class="a" style="left:1546px;top:419px" width="5" height="8" viewBox="0 0 5 8"><polygon points="0.5,0.5 0.5,7.5 4.5,4" fill="#666"/></svg>
<div class="t" style="left:1405px;top:418px;color:#000;font-size:11px;">Y:</div>
<div class="t" style="left:1241px;top:418px;width:300px;text-align:right;color:#000;font-size:11px;">1080 px</div>
<div class="a" style="left:1390px;top:433px;width:167px;height:20px;border:1px solid #262626;border-radius:0px 0px 9px 9px;background:linear-gradient(#a2a2a2,#b6b6b6)"></div>
<div class="a" style="left:1391px;top:434px;width:86px;height:18px;border-radius:0 0 0 8px;background:linear-gradient(#6e6e6e,#858585)"></div>
<div class="t" style="left:1241px;top:438px;width:300px;text-align:right;color:#000;font-size:11px;">50%</div>
<div class="a" style="left:1566px;top:394px;width:169px;height:20px;border:1px solid #262626;border-radius:9px 9px 0px 0px;background:linear-gradient(#a2a2a2,#b6b6b6)"></div>
<svg class="a" style="left:1574px;top:400px" width="5" height="8" viewBox="0 0 5 8"><polygon points="4.5,0.5 4.5,7.5 0.5,4" fill="#666"/></svg>
<svg class="a" style="left:1725px;top:400px" width="5" height="8" viewBox="0 0 5 8"><polygon points="0.5,0.5 0.5,7.5 4.5,4" fill="#666"/></svg>
<div class="t" style="left:1582px;top:399px;color:#000;font-size:11px;">Start Frame:</div>
<div class="t" style="left:1420px;top:399px;width:300px;text-align:right;color:#000;font-size:11px;">1</div>
<div class="a" style="left:1566px;top:413px;width:169px;height:21px;border:1px solid #262626;border-radius:0px 0px 0px 0px;background:linear-gradient(#a2a2a2,#b6b6b6)"></div>
<svg class="a" style="left:1574px;top:419px" width="5" height="8" viewBox="0 0 5 8"><polygon points="4.5,0.5 4.5,7.5 0.5,4" fill="#666"/></svg>
<svg class="a" style="left:1725px;top:419px" width="5" height="8" viewBox="0 0 5 8"><polygon points="0.5,0.5 0.5,7.5 4.5,4" fill="#666"/></svg>
<div class="t" style="left:1582px;top:418px;color:#000;font-size:11px;">End Frame:</div>
<div class="t" style="left:1420px;top:418px;width:300px;text-align:right;color:#000;font-size:11px;">250</div>
<div class="a" style="left:1566px;top:433px;width:169px;height:20px;border:1px solid #262626;border-radius:0px 0px 9px 9px;background:linear-gradient(#a2a2a2,#b6b6b6)"></div>
<svg class="a" style="left:1574px;top:439px" width="5" height="8" viewBox="0 0 5 8"><polygon points="4.5,0.5 4.5,7.5 0.5,4" fill="#666"/></svg>
<svg class="a" style="left:1725px;top:439px" width="5" height="8" viewBox="0 0 5 8"><polygon points="0.5,0.5 0.5,7.5 4.5,4" fill="#666"/></svg>
<div class="t" style="left:1582px;top:438px;color:#000;font-size:11px;">Frame Step:</div>
<div class="t" style="left:1420px;top:438px;width:300px;text-align:right;color:#000;font-size:11px;">1</div>
<div class="t" style="left:1396px;top:459px;color:#000;font-size:11px;">Aspect Ratio:</div>
<div class="t" style="left:1574px;top:459px;color:#000;font-size:11px;">Frame Rate:</div>
<div class="a" style="left:1390px;top:474px;width:167px;height:20px;border:1px solid #262626;border-radius:9px 9px 0px 0px;background:linear-gradient(#a2a2a2,#b6b6b6)"></div>
<svg class="a" style="left:1397px;top:480px" width="5" height="8" viewBox="0 0 5 8"><polygon points="4.5,0.5 4.5,7.5 0.5,4" fill="#666"/></svg>
<svg class="a" style="left:1546px;top:480px" width="5" height="8" viewBox="0 0 5 8"><polygon points="0.5,0.5 0.5,7.5 4.5,4" fill="#666"/></svg>
<div class="t" style="left:1405px;top:479px;color:#000;font-size:11px;">X:</div>
<div class="t" style="left:1241px;top:479px;width:300px;text-align:right;color:#000;font-size:11px;">1.000</div>
<div class="a" style="left:1390px;top:493px;width:167px;height:20px;border:1px solid #262626;border-radius:0px 0px 9px 9px;background:linear-gradient(#a2a2a2,#b6b6b6)"></div>
<svg class="a" style="left:1397px;top:499px" width="5" height="8" viewBox="0 0 5 8"><polygon points="4.5,0.5 4.5,7.5 0.5,4" fill="#666"/></svg>
<svg class="a" style="left:1546px;top:499px" width="5" height="8" viewBox="0 0 5 8"><polygon points="0.5,0.5 0.5,7.5 4.5,4" fill="#666"/></svg>
<div class="t" style="left:1405px;top:498px;color:#000;font-size:11px;">Y:</div>
<div class="t" style="left:1241px;top:498px;width:300px;text-align:right;color:#000;font-size:11px;">1.000</div>
<div class="a" style="left:1566px;top:474px;width:169px;height:20px;border:1px solid #262626;border-radius:4px 4px 4px 4px;background:linear-gradient(#555555,#393939);"></div>
<div class="t" style="left:1574px;top:479px;color:#fff;font-size:11px;">24 fps</div>
<svg class="a" style="left:1725px;top:478px" width="8" height="13" viewBox="0 0 8 13"><polygon points="4,0.5 7.5,5 0.5,5" fill="#ddd"/><polygon points="0.5,8 7.5,8 4,12.5" fill="#ddd"/></svg>
<div class="a" style="left:1392px;top:519px;width:14px;height:14px;border:1px solid #262626;border-radius:3px;background:linear-gradient(#393939,#525252)"></div>
<div class="t" style="left:1414px;top:521px;color:#000;font-size:11px;">Border</div>
<div class="a" style="left:1480px;top:519px;width:14px;height:14px;border:1px solid #555;border-radius:3px;background:linear-gradient(#5a5a5a,#666)"></div>
<div class="t" style="left:1502px;top:521px;color:#4c4c4c;font-size:11px;">Crop</div>
<div class="t" style="left:1574px;top:499px;color:#000;font-size:11px;">Time Remapping:</div>
<div class="a" style="left:1566px;top:514px;width:85px;height:20px;border:1px solid #262626;border-radius:9px 0px 0px 9px;background:linear-gradient(#a2a2a2,#b6b6b6);"></div>
<div class="a" style="left:1650px;top:514px;width:85px;height:20px;border:1px solid #262626;border-radius:0px 9px 9px 0px;background:linear-gradient(#a2a2a2,#b6b6b6);"></div>
<svg class="a" style="left:1573px;top:520px" width="5" height="8" viewBox="0 0 5 8"><polygon points="4.5,0.5 4.5,7.5 0.5,4" fill="#666"/></svg>
<div class="t" style="left:1582px;top:519px;color:#000;font-size:11px;">Old:</div>
<div class="t" style="left:1334px;top:519px;width:300px;text-align:right;color:#000;font-size:11px;">100</div>
<svg class="a" style="left:1640px;top:520px" width="5" height="8" viewBox="0 0 5 8"><polygon points="0.5,0.5 0.5,7.5 4.5,4" fill="#666"/></svg>
<svg class="a" style="left:1657px;top:520px" width="5" height="8" viewBox="0 0 5 8"><polygon points="4.5,0.5 4.5,7.5 0.5,4" fill="#666"/></svg>
<div class="t" style="left:1666px;top:519px;color:#000;font-size:11px;">New:</div>
<div class="t" style="left:1420px;top:519px;width:300px;text-align:right;color:#000;font-size:11px;">100</div>
<svg class="a" style="left:1725px;top:520px" width="5" height="8" viewBox="0 0 5 8"><polygon points="0.5,0.5 0.5,7.5 4.5,4" fill="#666"/></svg>
<div class="a" style="left:1386px;top:543px;width:353px;height:1px;background:#4e4e4e"></div><div class="a" style="left:1386px;top:544px;width:353px;height:1px;background:#8a8a8a"></div>
<svg class="a" style="left:1394px;top:551px" width="10" height="9" viewBox="0 0 10 9"><polygon points="0.5,0.5 9.5,0.5 5,8.5" fill="#111"/></svg>
<div class="a" style="left:1406px;top:548px;width:14px;height:14px;border:1px solid #262626;border-radius:3px;background:linear-gradient(#393939,#525252)"></div><svg class="a" style="left:1406px;top:545px" width="16" height="17" viewBox="0 0 16 17"><polyline points="3.5,9 6.5,12 12.5,2.5" fill="none" stroke="#e4e4e4" stroke-width="1.8"/></svg>
<div class="t" style="left:1426px;top:550px;color:#000;font-size:12px;">Anti-Aliasing</div>
<svg class="a" style="left:1723px;top:554px" width="12" height="6" viewBox="0 0 12 6"><g fill="#3a3a3a"><rect x="0" y="1" width="1" height="1"/><rect x="0" y="4" width="1" height="1"/><rect x="3" y="1" width="1" height="1"/><rect x="3" y="4" width="1" height="1"/><rect x="6" y="1" width="1" height="1"/><rect x="6" y="4" width="1" height="1"/><rect x="9" y="1" width="1" height="1"/><rect x="9" y="4" width="1" height="1"/></g><g fill="#9a9a9a"><rect x="0" y="0" width="1" height="1"/><rect x="0" y="3" width="1" height="1"/><rect x="3" y="0" width="1" height="1"/><rect x="3" y="3" width="1" height="1"/><rect x="6" y="0" width="1" height="1"/><rect x="6" y="3" width="1" height="1"/><rect x="9" y="0" width="1" height="1"/><rect x="9" y="3" width="1" height="1"/></g></svg>
<div class="a" style="left:1390px;top:577px;width:42px;height:19px;border:1px solid #262626;border-radius:4px 0px 0px 4px;background:linear-gradient(#575757,#363636);"></div>
<div class="a" style="left:1430px;top:577px;width:43px;height:19px;border:1px solid #262626;border-radius:0px 0px 0px 0px;background:linear-gradient(#6d96d6,#4a72b3);"></div>
<div class="a" style="left:1472px;top:577px;width:43px;height:19px;border:1px solid #262626;border-radius:0px 0px 0px 0px;background:linear-gradient(#575757,#363636);"></div>
<div class="a" style="left:1514px;top:577px;width:43px;height:19px;border:1px solid #262626;border-radius:0px 4px 4px 0px;background:linear-gradient(#575757,#363636);"></div>
<div class="t" style="left:1390px;top:581px;width:41px;text-align:center;color:#fff;font-size:11px;">5</div>
<div class="t" style="left:1430px;top:581px;width:42px;text-align:center;color:#000;font-size:11px;">8</div>
<div class="t" style="left:1472px;top:581px;width:42px;text-align:center;color:#fff;font-size:11px;">11</div>
<div class="t" style="left:1514px;top:581px;width:43px;text-align:center;color:#fff;font-size:11px;">16</div>
<div class="a" style="left:1566px;top:577px;width:169px;height:19px;border:1px solid #262626;border-radius:4px 4px 4px 4px;background:linear-gradient(#555555,#393939);"></div>
<div class="t" style="left:1574px;top:581px;color:#fff;font-size:11px;">Mitchell-Netravali</div>
<svg class="a" style="left:1725px;top:580px" width="8" height="13" viewBox="0 0 8 13"><polygon points="4,0.5 7.5,5 0.5,5" fill="#ddd"/><polygon points="0.5,8 7.5,8 4,12.5" fill="#ddd"/></svg>
<div class="a" style="left:1392px;top:601px;width:14px;height:14px;border:1px solid #262626;border-radius:3px;background:linear-gradient(#393939,#525252)"></div>
<div class="t" style="left:1414px;top:603px;color:#000;font-size:11px;">Full Sample</div>
<div class="a" style="left:1566px;top:599px;width:169px;height:19px;border:1px solid #262626;border-radius:9px 9px 9px 9px;background:linear-gradient(#a2a2a2,#b6b6b6);"></div>
<svg class="a" style="left:1573px;top:605px" width="5" height="8" viewBox="0 0 5 8"><polygon points="4.5,0.5 4.5,7.5 0.5,4" fill="#666"/></svg>
<svg class="a" style="left:1725px;top:605px" width="5" height="8" viewBox="0 0 5 8"><polygon points="0.5,0.5 0.5,7.5 4.5,4" fill="#666"/></svg>
<div class="t" style="left:1582px;top:603px;color:#000;font-size:11px;">Size:</div>
<div class="t" style="left:1420px;top:603px;width:300px;text-align:right;color:#000;font-size:11px;">1.000 px</div>
<div class="a" style="left:1386px;top:625px;width:353px;height:1px;background:#4e4e4e"></div><div class="a" style="left:1386px;top:626px;width:353px;height:1px;background:#8a8a8a"></div>
<svg class="a" style="left:1394px;top:632px" width="9" height="10" viewBox="0 0 9 10"><polygon points="0.5,0.5 8.5,5 0.5,9.5" fill="#111"/></svg>
<div class="a" style="left:1406px;top:630px;width:14px;height:14px;border:1px solid #262626;border-radius:3px;background:linear-gradient(#393939,#525252)"></div>
<div class="t" style="left:1426px;top:632px;color:#000;font-size:12px;">Sampled Motion Blur</div>
<svg class="a" style="left:1723px;top:636px" width="12" height="6" viewBox="0 0 12 6"><g fill="#3a3a3a"><rect x="0" y="1" width="1" height="1"/><rect x="0" y="4" width="1" height="1"/><rect x="3" y="1" width="1" height="1"/><rect x="3" y="4" width="1" height="1"/><rect x="6" y="1" width="1" height="1"/><rect x="6" y="4" width="1" height="1"/><rect x="9" y="1" width="1" height="1"/><rect x="9" y="4" width="1" height="1"/></g><g fill="#9a9a9a"><rect x="0" y="0" width="1" height="1"/><rect x="0" y="3" width="1" height="1"/><rect x="3" y="0" width="1" height="1"/><rect x="3" y="3" width="1" height="1"/><rect x="6" y="0" width="1" height="1"/><rect x="6" y="3" width="1" height="1"/><rect x="9" y="0" width="1" height="1"/><rect x="9" y="3" width="1" height="1"/></g></svg>
<div class="a" style="left:1386px;top:649px;width:353px;height:1px;background:#4e4e4e"></div><div class="a" style="left:1386px;top:650px;width:353px;height:1px;background:#8a8a8a"></div>
<svg class="a" style="left:1394px;top:656px" width="9" height="10" viewBox="0 0 9 10"><polygon points="0.5,0.5 8.5,5 0.5,9.5" fill="#111"/></svg>
<div class="t" style="left:1406px;top:656px;color:#000;font-size:12px;">Shading</div>
<svg class="a" style="left:1723px;top:660px" width="12" height="6" viewBox="0 0 12 6"><g fill="#3a3a3a"><rect x="0" y="1" width="1" height="1"/><rect x="0" y="4" width="1" height="1"/><rect x="3" y="1" width="1" height="1"/><rect x="3" y="4" width="1" height="1"/><rect x="6" y="1" width="1" height="1"/><rect x="6" y="4" width="1" height="1"/><rect x="9" y="1" width="1" height="1"/><rect x="9" y="4" width="1" height="1"/></g><g fill="#9a9a9a"><rect x="0" y="0" width="1" height="1"/><rect x="0" y="3" width="1" height="1"/><rect x="3" y="0" width="1" height="1"/><rect x="3" y="3" width="1" height="1"/><rect x="6" y="0" width="1" height="1"/><rect x="6" y="3" width="1" height="1"/><rect x="9" y="0" width="1" height="1"/><rect x="9" y="3" width="1" height="1"/></g></svg>
<div class="a" style="left:1386px;top:673px;width:353px;height:1px;background:#4e4e4e"></div><div class="a" style="left:1386px;top:674px;width:353px;height:1px;background:#8a8a8a"></div>
<svg class="a" style="left:1394px;top:680px" width="9" height="10" viewBox="0 0 9 10"><polygon points="0.5,0.5 8.5,5 0.5,9.5" fill="#111"/></svg>
<div class="t" style="left:1406px;top:680px;color:#000;font-size:12px;">Performance</div>
<svg class="a" style="left:1723px;top:684px" width="12" height="6" viewBox="0 0 12 6"><g fill="#3a3a3a"><rect x="0" y="1" width="1" height="1"/><rect x="0" y="4" width="1" height="1"/><rect x="3" y="1" width="1" height="1"/><rect x="3" y="4" width="1" height="1"/><rect x="6" y="1" width="1" height="1"/><rect x="6" y="4" width="1" height="1"/><rect x="9" y="1" width="1" height="1"/><rect x="9" y="4" width="1" height="1"/></g><g fill="#9a9a9a"><rect x="0" y="0" width="1" height="1"/><rect x="0" y="3" width="1" height="1"/><rect x="3" y="0" width="1" height="1"/><rect x="3" y="3" width="1" height="1"/><rect x="6" y="0" width="1" height="1"/><rect x="6" y="3" width="1" height="1"/><rect x="9" y="0" width="1" height="1"/><rect x="9" y="3" width="1" height="1"/></g></svg>
<div class="a" style="left:1386px;top:697px;width:353px;height:1px;background:#4e4e4e"></div><div class="a" style="left:1386px;top:698px;width:353px;height:1px;background:#8a8a8a"></div>
<svg class="a" style="left:1394px;top:704px" width="9" height="10" viewBox="0 0 9 10"><polygon points="0.5,0.5 8.5,5 0.5,9.5" fill="#111"/></svg>
<div class="t" style="left:1406px;top:704px;color:#000;font-size:12px;">Post Processing</div>
<svg class="a" style="left:1723px;top:708px" width="12" height="6" viewBox="0 0 12 6"><g fill="#3a3a3a"><rect x="0" y="1" width="1" height="1"/><rect x="0" y="4" width="1" height="1"/><rect x="3" y="1" width="1" height="1"/><rect x="3" y="4" width="1" height="1"/><rect x="6" y="1" width="1" height="1"/><rect x="6" y="4" width="1" height="1"/><rect x="9" y="1" width="1" height="1"/><rect x="9" y="4" width="1" height="1"/></g><g fill="#9a9a9a"><rect x="0" y="0" width="1" height="1"/><rect x="0" y="3" width="1" height="1"/><rect x="3" y="0" width="1" height="1"/><rect x="3" y="3" width="1" height="1"/><rect x="6" y="0" width="1" height="1"/><rect x="6" y="3" width="1" height="1"/><rect x="9" y="0" width="1" height="1"/><rect x="9" y="3" width="1" height="1"/></g></svg>
<div class="a" style="left:1386px;top:721px;width:353px;height:1px;background:#4e4e4e"></div><div class="a" style="left:1386px;top:722px;width:353px;height:1px;background:#8a8a8a"></div>
<svg class="a" style="left:1394px;top:728px" width="9" height="10" viewBox="0 0 9 10"><polygon points="0.5,0.5 8.5,5 0.5,9.5" fill="#111"/></svg>
<div class="t" style="left:1406px;top:728px;color:#000;font-size:12px;">Metadata</div>
<svg class="a" style="left:1723px;top:732px" width="12" height="6" viewBox="0 0 12 6"><g fill="#3a3a3a"><rect x="0" y="1" width="1" height="1"/><rect x="0" y="4" width="1" height="1"/><rect x="3" y="1" width="1" height="1"/><rect x="3" y="4" width="1" height="1"/><rect x="6" y="1" width="1" height="1"/><rect x="6" y="4" width="1" height="1"/><rect x="9" y="1" width="1" height="1"/><rect x="9" y="4" width="1" height="1"/></g><g fill="#9a9a9a"><rect x="0" y="0" width="1" height="1"/><rect x="0" y="3" width="1" height="1"/><rect x="3" y="0" width="1" height="1"/><rect x="3" y="3" width="1" height="1"/><rect x="6" y="0" width="1" height="1"/><rect x="6" y="3" width="1" height="1"/><rect x="9" y="0" width="1" height="1"/><rect x="9" y="3" width="1" height="1"/></g></svg>
<div class="a" style="left:1386px;top:745px;width:353px;height:1px;background:#4e4e4e"></div><div class="a" style="left:1386px;top:746px;width:353px;height:1px;background:#8a8a8a"></div>
<svg class="a" style="left:1394px;top:753px" width="10" height="9" viewBox="0 0 10 9"><polygon points="0.5,0.5 9.5,0.5 5,8.5" fill="#111"/></svg>
<div class="t" style="left:1406px;top:752px;color:#000;font-size:12px;">Output</div>
<svg class="a" style="left:1723px;top:756px" width="12" height="6" viewBox="0 0 12 6"><g fill="#3a3a3a"><rect x="0" y="1" width="1" height="1"/><rect x="0" y="4" width="1" height="1"/><rect x="3" y="1" width="1" height="1"/><rect x="3" y="4" width="1" height="1"/><rect x="6" y="1" width="1" height="1"/><rect x="6" y="4" width="1" height="1"/><rect x="9" y="1" width="1" height="1"/><rect x="9" y="4" width="1" height="1"/></g><g fill="#9a9a9a"><rect x="0" y="0" width="1" height="1"/><rect x="0" y="3" width="1" height="1"/><rect x="3" y="0" width="1" height="1"/><rect x="3" y="3" width="1" height="1"/><rect x="6" y="0" width="1" height="1"/><rect x="6" y="3" width="1" height="1"/><rect x="9" y="0" width="1" height="1"/><rect x="9" y="3" width="1" height="1"/></g></svg>
<div class="a" style="left:1390px;top:778px;width:326px;height:20px;border:1px solid #262626;border-radius:4px 0px 0px 4px;background:linear-gradient(#999999,#adadad);"></div>
<div class="a" style="left:1715px;top:778px;width:21px;height:20px;border:1px solid #262626;border-radius:0px 4px 4px 0px;background:linear-gradient(#aaaaaa,#8c8c8c);"></div>
<div class="t" style="left:1396px;top:783px;color:#000;font-size:11px;">/tmp\</div>
<svg class="a" style="left:1717px;top:781px" width="18" height="15" viewBox="0 0 18 15"><rect x="6" y="1" width="9" height="7" fill="#f2f2f2" stroke="#333" stroke-width="0.8"/><path d="M1,5 H6 L7.5,6.5 H17 V14 H1 Z" fill="#d8c890" stroke="#333" stroke-width="1"/></svg>
<div class="a" style="left:1392px;top:806px;width:14px;height:14px;border:1px solid #262626;border-radius:3px;background:linear-gradient(#393939,#525252)"></div><svg class="a" style="left:1392px;top:803px" width="16" height="17" viewBox="0 0 16 17"><polyline points="3.5,9 6.5,12 12.5,2.5" fill="none" stroke="#e4e4e4" stroke-width="1.8"/></svg>
<div class="t" style="left:1414px;top:808px;color:#eee;font-size:11px;">Overwrite</div>
<div class="a" style="left:1569px;top:806px;width:14px;height:14px;border:1px solid #262626;border-radius:3px;background:linear-gradient(#393939,#525252)"></div><svg class="a" style="left:1569px;top:803px" width="16" height="17" viewBox="0 0 16 17"><polyline points="3.5,9 6.5,12 12.5,2.5" fill="none" stroke="#e4e4e4" stroke-width="1.8"/></svg>
<div class="t" style="left:1591px;top:808px;color:#eee;font-size:11px;">File Extensions</div>
<div class="a" style="left:1392px;top:828px;width:14px;height:14px;border:1px solid #262626;border-radius:3px;background:linear-gradient(#393939,#525252)"></div>
<div class="t" style="left:1414px;top:830px;color:#000;font-size:11px;">Placeholders</div>
<div class="a" style="left:1569px;top:828px;width:14px;height:14px;border:1px solid #262626;border-radius:3px;background:linear-gradient(#393939,#525252)"></div>
<div class="t" style="left:1591px;top:830px;color:#000;font-size:11px;">Cache Result</div>
<div class="a" style="left:1389px;top:851px;width:168px;height:19px;border:1px solid #262626;border-radius:4px 4px 4px 4px;background:linear-gradient(#555555,#393939);"></div>
<div class="t" style="left:1412px;top:855px;color:#fff;font-size:11px;">PNG</div>
<svg class="a" style="left:1548px;top:854px" width="8" height="13" viewBox="0 0 8 13"><polygon points="4,0.5 7.5,5 0.5,5" fill="#ddd"/><polygon points="0.5,8 7.5,8 4,12.5" fill="#ddd"/></svg>
<svg class="a" style="left:1394px;top:853px" width="15" height="15" viewBox="0 0 15 15"><path d="M1,1 H10 L14,5 V14 H1 Z" fill="#f4f4f4" stroke="#222" stroke-width="1"/><rect x="2.5" y="4" width="10" height="4" fill="#e8a8a0"/><rect x="2.5" y="9" width="10" height="3" fill="#a8b8d8"/></svg>
<div class="a" style="left:1567px;top:851px;width:56px;height:19px;border:1px solid #262626;border-radius:4px 0px 0px 4px;background:linear-gradient(#575757,#363636);"></div>
<div class="a" style="left:1622px;top:851px;width:57px;height:19px;border:1px solid #262626;border-radius:0px 0px 0px 0px;background:linear-gradient(#575757,#363636);"></div>
<div class="a" style="left:1677px;top:851px;width:58px;height:19px;border:1px solid #262626;border-radius:0px 4px 4px 0px;background:linear-gradient(#6d96d6,#4a72b3);"></div>
<div class="t" style="left:1567px;top:855px;width:55px;text-align:center;color:#fff;font-size:11px;">BW</div>
<div class="t" style="left:1622px;top:855px;width:56px;text-align:center;color:#fff;font-size:11px;">RGB</div>
<div class="t" style="left:1677px;top:855px;width:58px;text-align:center;color:#000;font-size:11px;">RGBA</div>
<div class="t" style="left:1396px;top:877px;color:#000;font-size:11px;">Color Depth:</div>
<div class="a" style="left:1510px;top:873px;width:113px;height:19px;border:1px solid #262626;border-radius:4px 0px 0px 4px;background:linear-gradient(#6d96d6,#4a72b3);"></div>
<div class="a" style="left:1622px;top:873px;width:114px;height:19px;border:1px solid #262626;border-radius:0px 4px 4px 0px;background:linear-gradient(#575757,#363636);"></div>
<div class="t" style="left:1510px;top:877px;width:112px;text-align:center;color:#000;font-size:11px;">8</div>
<div class="t" style="left:1622px;top:877px;width:114px;text-align:center;color:#fff;font-size:11px;">16</div>
<div class="a" style="left:1390px;top:895px;width:346px;height:19px;border:1px solid #262626;border-radius:9px 9px 9px 9px;background:linear-gradient(#a2a2a2,#b6b6b6);"></div>
<div class="a" style="left:1391px;top:896px;width:57px;height:17px;border-radius:8px 0 0 8px;background:linear-gradient(#6e6e6e,#858585)"></div>
<div class="t" style="left:1403px;top:899px;color:#000;font-size:11px;">Compression:</div>
<div class="t" style="left:1420px;top:899px;width:300px;text-align:right;color:#000;font-size:11px;">15%</div>
<div class="a" style="left:1386px;top:923px;width:353px;height:1px;background:#4e4e4e"></div><div class="a" style="left:1386px;top:924px;width:353px;height:1px;background:#8a8a8a"></div>
<svg class="a" style="left:1394px;top:930px" width="9" height="10" viewBox="0 0 9 10"><polygon points="0.5,0.5 8.5,5 0.5,9.5" fill="#111"/></svg>
<div class="t" style="left:1406px;top:930px;color:#000;font-size:12px;">Bake</div>
<svg class="a" style="left:1723px;top:934px" width="12" height="6" viewBox="0 0 12 6"><g fill="#3a3a3a"><rect x="0" y="1" width="1" height="1"/><rect x="0" y="4" width="1" height="1"/><rect x="3" y="1" width="1" height="1"/><rect x="3" y="4" width="1" height="1"/><rect x="6" y="1" width="1" height="1"/><rect x="6" y="4" width="1" height="1"/><rect x="9" y="1" width="1" height="1"/><rect x="9" y="4" width="1" height="1"/></g><g fill="#9a9a9a"><rect x="0" y="0" width="1" height="1"/><rect x="0" y="3" width="1" height="1"/><rect x="3" y="0" width="1" height="1"/><rect x="3" y="3" width="1" height="1"/><rect x="6" y="0" width="1" height="1"/><rect x="6" y="3" width="1" height="1"/><rect x="9" y="0" width="1" height="1"/><rect x="9" y="3" width="1" height="1"/></g></svg>
<div class="a" style="left:1386px;top:947px;width:353px;height:1px;background:#4e4e4e"></div><div class="a" style="left:1386px;top:948px;width:353px;height:1px;background:#8a8a8a"></div>
<svg class="a" style="left:1394px;top:954px" width="9" height="10" viewBox="0 0 9 10"><polygon points="0.5,0.5 8.5,5 0.5,9.5" fill="#111"/></svg>
<div class="a" style="left:1406px;top:952px;width:14px;height:14px;border:1px solid #262626;border-radius:3px;background:linear-gradient(#393939,#525252)"></div>
<div class="t" style="left:1426px;top:954px;color:#000;font-size:12px;">Freestyle</div>
<svg class="a" style="left:1723px;top:958px" width="12" height="6" viewBox="0 0 12 6"><g fill="#3a3a3a"><rect x="0" y="1" width="1" height="1"/><rect x="0" y="4" width="1" height="1"/><rect x="3" y="1" width="1" height="1"/><rect x="3" y="4" width="1" height="1"/><rect x="6" y="1" width="1" height="1"/><rect x="6" y="4" width="1" height="1"/><rect x="9" y="1" width="1" height="1"/><rect x="9" y="4" width="1" height="1"/></g><g fill="#9a9a9a"><rect x="0" y="0" width="1" height="1"/><rect x="0" y="3" width="1" height="1"/><rect x="3" y="0" width="1" height="1"/><rect x="3" y="3" width="1" height="1"/><rect x="6" y="0" width="1" height="1"/><rect x="6" y="3" width="1" height="1"/><rect x="9" y="0" width="1" height="1"/><rect x="9" y="3" width="1" height="1"/></g></svg>
<svg class="a" style="left:1381px;top:961px" width="14" height="14" viewBox="0 0 14 14"><g stroke="#ddd" stroke-width="1" opacity="0.7"><line x1="0" y1="2" x2="12" y2="14"/><line x1="0" y1="6" x2="8" y2="14"/><line x1="0" y1="10" x2="4" y2="14"/></g></svg>
</body></html>
